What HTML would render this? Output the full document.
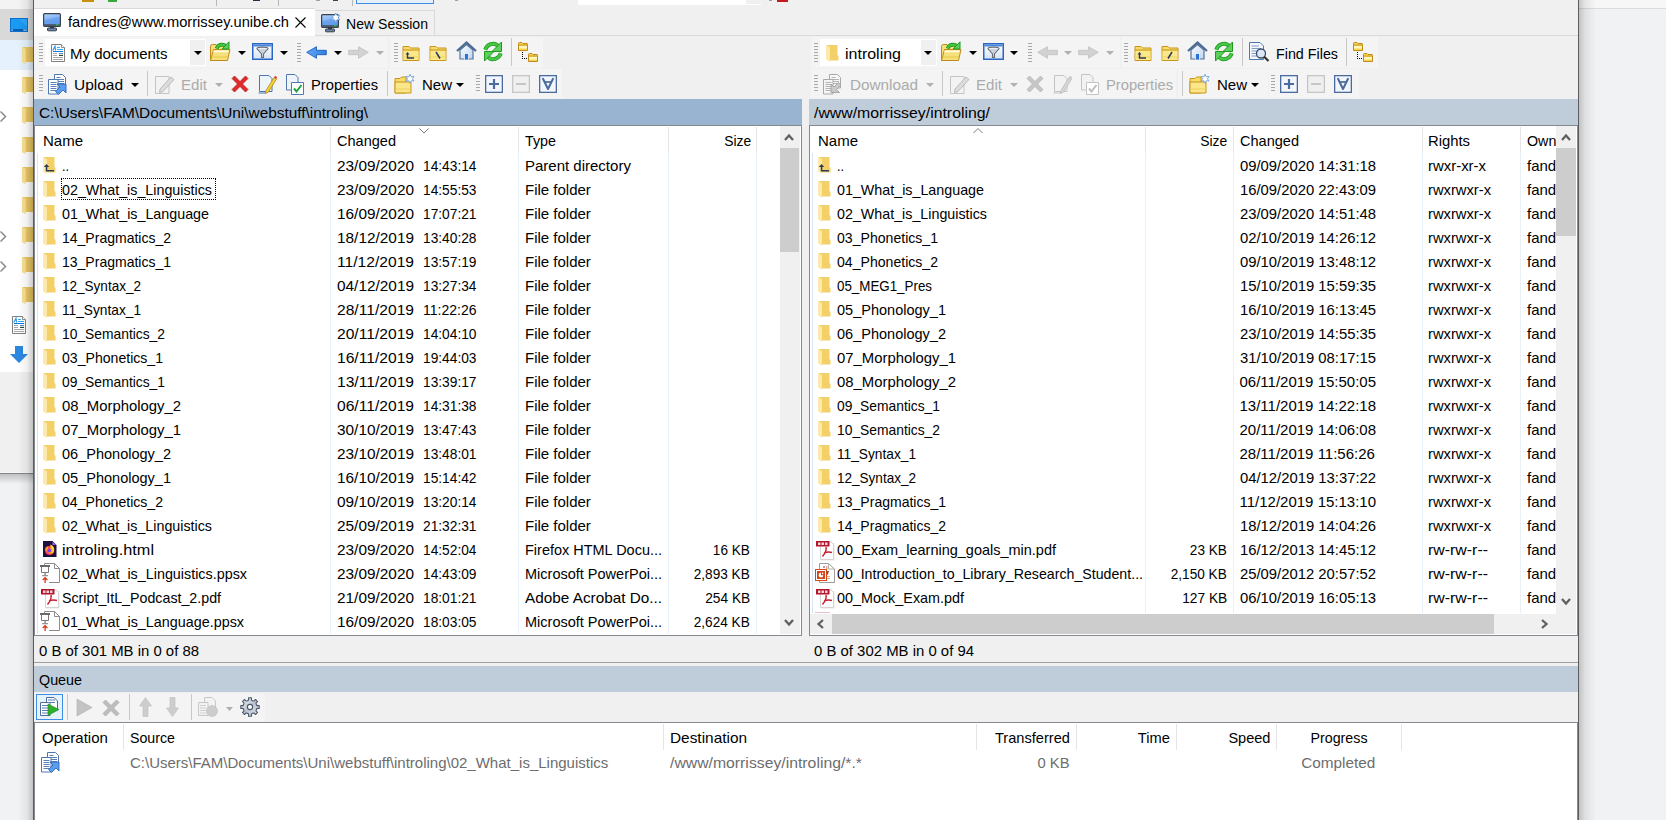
<!DOCTYPE html><html><head><meta charset="utf-8"><title>WinSCP</title><style>html,body{margin:0;padding:0;}body{width:1666px;height:820px;position:relative;overflow:hidden;background:#f0f0f0;font-family:"Liberation Sans",sans-serif;font-size:15px;color:#000;}span{font-family:"Liberation Sans",sans-serif;}</style></head><body><div style="position:absolute;left:0px;top:0px;width:33px;height:9px;background:#f3f3f3;"></div>
<div style="position:absolute;left:0px;top:9px;width:33px;height:31px;background:#d9d9d9;"></div>
<div style="position:absolute;left:0px;top:40px;width:33px;height:30px;background:#e5f1fc;"></div>
<div style="position:absolute;left:0px;top:70px;width:33px;height:302px;background:#ffffff;"></div>
<div style="position:absolute;left:0px;top:372px;width:33px;height:100px;background:#f0f0f0;"></div>
<div style="position:absolute;left:0px;top:472px;width:33px;height:348px;background:#f1f2f4;"></div>
<div style="position:absolute;left:0px;top:472px;width:33px;height:1px;background:#f6f6f6;"></div>
<div style="position:absolute;left:0px;top:473px;width:33px;height:1px;background:#858585;"></div>
<div style="position:absolute;left:0px;top:474px;width:33px;height:10px;background:linear-gradient(to bottom,rgba(0,0,0,0.2),rgba(0,0,0,0));"></div>
<svg style="position:absolute;left:10px;top:18px;overflow:visible" width="18" height="14" viewBox="0 0 18 14"><rect x="0.5" y="0.5" width="17" height="13" fill="#1a9af3" stroke="#0b6fd0"/><path d="M9 1 L17 1 V9 Z" fill="#3aaefa" opacity="0.6"/><rect x="1" y="11" width="16" height="2" fill="#0a5fb0"/><rect x="1.5" y="11.5" width="1.2" height="1.2" fill="#fff"/><rect x="13.5" y="11.5" width="1.2" height="1.2" fill="#fff"/><rect x="15.3" y="11.5" width="1.2" height="1.2" fill="#fff"/></svg>
<svg style="position:absolute;left:22px;top:47px;overflow:visible" width="12" height="17" viewBox="0 0 12 17"><path d="M1 0 H12 V15 H1 Z" fill="#e9c662"/><path d="M0 0 L3.8 1.8 V17 L0 15.2 Z" fill="#f7df94"/></svg>
<svg style="position:absolute;left:22px;top:77px;overflow:visible" width="12" height="17" viewBox="0 0 12 17"><path d="M1 0 H12 V15 H1 Z" fill="#e9c662"/><path d="M0 0 L3.8 1.8 V17 L0 15.2 Z" fill="#f7df94"/></svg>
<svg style="position:absolute;left:22px;top:107px;overflow:visible" width="12" height="17" viewBox="0 0 12 17"><path d="M1 0 H12 V15 H1 Z" fill="#e9c662"/><path d="M0 0 L3.8 1.8 V17 L0 15.2 Z" fill="#f7df94"/></svg>
<svg style="position:absolute;left:22px;top:137px;overflow:visible" width="12" height="17" viewBox="0 0 12 17"><path d="M1 0 H12 V15 H1 Z" fill="#e9c662"/><path d="M0 0 L3.8 1.8 V17 L0 15.2 Z" fill="#f7df94"/></svg>
<svg style="position:absolute;left:22px;top:167px;overflow:visible" width="12" height="17" viewBox="0 0 12 17"><path d="M1 0 H12 V15 H1 Z" fill="#e9c662"/><path d="M0 0 L3.8 1.8 V17 L0 15.2 Z" fill="#f7df94"/></svg>
<svg style="position:absolute;left:22px;top:197px;overflow:visible" width="12" height="17" viewBox="0 0 12 17"><path d="M1 0 H12 V15 H1 Z" fill="#e9c662"/><path d="M0 0 L3.8 1.8 V17 L0 15.2 Z" fill="#f7df94"/></svg>
<svg style="position:absolute;left:22px;top:227px;overflow:visible" width="12" height="17" viewBox="0 0 12 17"><path d="M1 0 H12 V15 H1 Z" fill="#e9c662"/><path d="M0 0 L3.8 1.8 V17 L0 15.2 Z" fill="#f7df94"/></svg>
<svg style="position:absolute;left:22px;top:257px;overflow:visible" width="12" height="17" viewBox="0 0 12 17"><path d="M1 0 H12 V15 H1 Z" fill="#e9c662"/><path d="M0 0 L3.8 1.8 V17 L0 15.2 Z" fill="#f7df94"/></svg>
<svg style="position:absolute;left:22px;top:287px;overflow:visible" width="12" height="17" viewBox="0 0 12 17"><path d="M1 0 H12 V15 H1 Z" fill="#e9c662"/><path d="M0 0 L3.8 1.8 V17 L0 15.2 Z" fill="#f7df94"/></svg>
<svg style="position:absolute;left:0px;top:111px;overflow:visible" width="7" height="11" viewBox="0 0 7 11"><path d="M0.5 0.5 L5.5 5.5 L0.5 10.5" stroke="#8a8a8a" stroke-width="1.5" fill="none"/></svg>
<svg style="position:absolute;left:0px;top:231px;overflow:visible" width="7" height="11" viewBox="0 0 7 11"><path d="M0.5 0.5 L5.5 5.5 L0.5 10.5" stroke="#8a8a8a" stroke-width="1.5" fill="none"/></svg>
<svg style="position:absolute;left:0px;top:261px;overflow:visible" width="7" height="11" viewBox="0 0 7 11"><path d="M0.5 0.5 L5.5 5.5 L0.5 10.5" stroke="#8a8a8a" stroke-width="1.5" fill="none"/></svg>
<svg style="position:absolute;left:12px;top:316px;overflow:visible" width="14" height="18" viewBox="0 0 14 18"><path d="M0.5 0.5 H10.5 L13.5 3.5 V17.5 H0.5 Z" fill="#fff" stroke="#808080"/><path d="M10.5 0.5 V3.5 H13.5" fill="#fff" stroke="#909090"/><path d="M1.8 6.5 L4 2.2 L4.6 6.5" stroke="#2a9af0" stroke-width="1.2" fill="none"/><rect x="6" y="3" width="3" height="1" fill="#40aaf0"/><rect x="6" y="5" width="6" height="1" fill="#40aaf0"/><rect x="2" y="7" width="10" height="1" fill="#0a7ee0"/><rect x="2" y="9" width="4" height="1" fill="#a8a8a8"/><rect x="2" y="11" width="4" height="1" fill="#a8a8a8"/><rect x="8" y="9" width="4" height="1" fill="#5a88e0"/><rect x="8" y="10" width="4" height="1" fill="#dde8d8"/><rect x="8" y="11" width="4" height="1" fill="#2c4a30"/><rect x="2" y="13" width="10" height="1" fill="#a8a8a8"/><rect x="2" y="15" width="10" height="1" fill="#a8a8a8"/></svg>
<svg style="position:absolute;left:10px;top:346px;overflow:visible" width="18" height="17" viewBox="0 0 18 17"><path d="M5 0 H13 V8 H18 L9 17 L0 8 H5 Z" fill="#2a88e0"/></svg>
<div style="position:absolute;left:18px;top:0;width:15px;height:820px;background:linear-gradient(to right,rgba(0,0,0,0),rgba(0,0,0,0.06) 60%,rgba(0,0,0,0.2))"></div>
<div style="position:absolute;left:1579px;top:0px;width:87px;height:8px;background:#f7f7f8;"></div>
<div style="position:absolute;left:1579px;top:8px;width:87px;height:1px;background:#dcdcdc;"></div>
<div style="position:absolute;left:1579px;top:9px;width:87px;height:811px;background:#f1f2f4;"></div>
<div style="position:absolute;left:1579px;top:0;width:17px;height:820px;background:linear-gradient(to right,rgba(0,0,0,0.2),rgba(0,0,0,0.08) 35%,rgba(0,0,0,0))"></div>
<div style="position:absolute;left:33px;top:0px;width:1546px;height:820px;background:#f0f0f0;"></div>
<div style="position:absolute;left:33px;top:0px;width:1px;height:820px;background:#5c5c5c;"></div>
<div style="position:absolute;left:1578px;top:0px;width:1px;height:820px;background:#5c5c5c;"></div>
<svg style="position:absolute;left:39px;top:-2px;overflow:visible" width="4" height="3" viewBox="0 0 4 3"><rect x="0" y="0" width="4" height="1" fill="#a8a8a8"/></svg>
<div style="position:absolute;left:82px;top:0px;width:12px;height:2px;background:#c8900f;"></div>
<div style="position:absolute;left:108px;top:0px;width:9px;height:2px;background:#3aa83a;"></div>
<div style="position:absolute;left:216px;top:0px;width:1px;height:6px;background:#b8b8b8;"></div>
<div style="position:absolute;left:253px;top:0px;width:7px;height:1px;background:#223048;"></div>
<div style="position:absolute;left:278px;top:0px;width:1px;height:6px;background:#b8b8b8;"></div>
<div style="position:absolute;left:316px;top:0px;width:4px;height:1px;background:#a0a0a0;"></div>
<div style="position:absolute;left:333px;top:0px;width:5px;height:1px;background:#334466;"></div>
<div style="position:absolute;left:352px;top:0px;width:1px;height:6px;background:#b8b8b8;"></div>
<div style="position:absolute;left:356px;top:0px;width:78px;height:4px;background:#e5f0fb;box-sizing:border-box;border:1px solid #3d8fe6;border-top:none"></div>
<div style="position:absolute;left:455px;top:0px;width:3px;height:1px;background:#a0a0a0;"></div>
<div style="position:absolute;left:578px;top:0px;width:183px;height:5px;background:#ffffff;"></div>
<div style="position:absolute;left:746px;top:0px;width:15px;height:4px;background:#f0f0f0;"></div>
<div style="position:absolute;left:769px;top:0px;width:3px;height:1px;background:#a0a0a0;"></div>
<div style="position:absolute;left:777px;top:0px;width:11px;height:2px;background:#c21a1a;"></div>
<div style="position:absolute;left:34px;top:8px;width:281px;height:1px;background:#dadada;"></div>
<div style="position:absolute;left:34px;top:9px;width:281px;height:27px;background:#ffffff;"></div>
<div style="position:absolute;left:315px;top:10px;width:120px;height:26px;background:#f0f0f0;box-sizing:border-box;border:1px solid #d9d9d9;border-left:none;border-bottom:none"></div>
<div style="position:absolute;left:315px;top:35px;width:1263px;height:1px;background:#dadada;"></div>
<svg style="position:absolute;left:43px;top:13px;overflow:visible" width="20" height="20" viewBox="0 0 20 20"><defs><linearGradient id="scr" x1="0" y1="0" x2="0.3" y2="1"><stop offset="0" stop-color="#b4d2fb"/><stop offset="0.45" stop-color="#8ab8f6"/><stop offset="0.5" stop-color="#6fa4ef"/><stop offset="1" stop-color="#5f98ea"/></linearGradient></defs><rect x="0.6" y="0.6" width="16.8" height="12.8" rx="1" fill="url(#scr)" stroke="#3a4250" stroke-width="1.2"/><rect x="1.2" y="11.2" width="15.6" height="1.6" fill="#4a525e"/><rect x="13" y="11.2" width="2.5" height="1.2" fill="#38c03c"/><rect x="7" y="13.5" width="4" height="1.8" fill="#2f3540"/><rect x="4.5" y="15" width="9" height="2.8" rx="0.8" fill="#6d85a3" stroke="#333c48" stroke-width="1"/></svg>
<span style="position:absolute;top:13px;height:17px;line-height:17px;font-size:15px;color:#000;white-space:pre;left:68px;transform-origin:0 0;transform:scaleX(0.9785);">fandres@www.morrissey.unibe.ch</span>
<svg style="position:absolute;left:295px;top:17px;overflow:visible" width="11" height="11" viewBox="0 0 11 11"><path d="M0.5 0.5 L10.5 10.5 M10.5 0.5 L0.5 10.5" stroke="#000" stroke-width="1.1"/></svg>
<svg style="position:absolute;left:321px;top:14px;overflow:visible" width="20" height="20" viewBox="0 0 20 20"><defs><linearGradient id="scr" x1="0" y1="0" x2="0.3" y2="1"><stop offset="0" stop-color="#b4d2fb"/><stop offset="0.45" stop-color="#8ab8f6"/><stop offset="0.5" stop-color="#6fa4ef"/><stop offset="1" stop-color="#5f98ea"/></linearGradient></defs><rect x="0.6" y="0.6" width="16.8" height="12.8" rx="1" fill="url(#scr)" stroke="#3a4250" stroke-width="1.2"/><rect x="1.2" y="11.2" width="15.6" height="1.6" fill="#4a525e"/><rect x="13" y="11.2" width="2.5" height="1.2" fill="#38c03c"/><rect x="7" y="13.5" width="4" height="1.8" fill="#2f3540"/><rect x="4.5" y="15" width="9" height="2.8" rx="0.8" fill="#6d85a3" stroke="#333c48" stroke-width="1"/><polygon points="14.80,-1.00 16.00,1.52 18.78,1.30 17.20,3.60 18.78,5.90 16.00,5.68 14.80,8.20 13.60,5.68 10.82,5.90 12.40,3.60 10.82,1.30 13.60,1.52" fill="#fff" stroke="#6f9fd8" stroke-width="0.9"/></svg>
<span style="position:absolute;top:15px;height:17px;line-height:17px;font-size:15px;color:#000;white-space:pre;left:346px;transform-origin:0 0;transform:scaleX(0.9367);">New Session</span>
<div style="position:absolute;left:35px;top:37px;width:257px;height:31px;background:#f4f4f4;"></div>
<div style="position:absolute;left:293px;top:37px;width:95px;height:31px;background:#f4f4f4;"></div>
<div style="position:absolute;left:390px;top:37px;width:153px;height:31px;background:#f4f4f4;"></div>
<div style="position:absolute;left:35px;top:69px;width:440px;height:29px;background:#f4f4f4;"></div>
<div style="position:absolute;left:476px;top:69px;width:86px;height:29px;background:#f4f4f4;"></div>
<svg style="position:absolute;left:39px;top:43px;overflow:visible" width="4" height="21" viewBox="0 0 4 21"><rect x="0" y="0" width="4" height="1" fill="#a8a8a8"/><rect x="0" y="3" width="4" height="1" fill="#a8a8a8"/><rect x="0" y="6" width="4" height="1" fill="#a8a8a8"/><rect x="0" y="9" width="4" height="1" fill="#a8a8a8"/><rect x="0" y="12" width="4" height="1" fill="#a8a8a8"/><rect x="0" y="15" width="4" height="1" fill="#a8a8a8"/><rect x="0" y="18" width="4" height="1" fill="#a8a8a8"/></svg>
<div style="position:absolute;left:45px;top:39px;width:161px;height:27px;background:#ffffff;"></div>
<div style="position:absolute;left:190px;top:40px;width:15px;height:25px;background:#f0f0f0;"></div>
<svg style="position:absolute;left:51px;top:44px;overflow:visible" width="14" height="18" viewBox="0 0 14 18"><path d="M0.5 0.5 H10.5 L13.5 3.5 V17.5 H0.5 Z" fill="#fff" stroke="#808080"/><path d="M10.5 0.5 V3.5 H13.5" fill="#fff" stroke="#909090"/><path d="M1.8 6.5 L4 2.2 L4.6 6.5" stroke="#2a9af0" stroke-width="1.2" fill="none"/><rect x="6" y="3" width="3" height="1" fill="#40aaf0"/><rect x="6" y="5" width="6" height="1" fill="#40aaf0"/><rect x="2" y="7" width="10" height="1" fill="#0a7ee0"/><rect x="2" y="9" width="4" height="1" fill="#a8a8a8"/><rect x="2" y="11" width="4" height="1" fill="#a8a8a8"/><rect x="8" y="9" width="4" height="1" fill="#5a88e0"/><rect x="8" y="10" width="4" height="1" fill="#dde8d8"/><rect x="8" y="11" width="4" height="1" fill="#2c4a30"/><rect x="2" y="13" width="10" height="1" fill="#a8a8a8"/><rect x="2" y="15" width="10" height="1" fill="#a8a8a8"/></svg>
<span style="position:absolute;top:45px;height:17px;line-height:17px;font-size:15px;color:#000;white-space:pre;left:70px;transform-origin:0 0;">My documents</span>
<svg style="position:absolute;left:194px;top:51px;overflow:visible" width="8" height="4" viewBox="0 0 8 4"><path d="M0 0 H8 L4.0 4 Z" fill="#000"/></svg>
<svg style="position:absolute;left:210px;top:41px;overflow:visible" width="21" height="21" viewBox="0 0 21 21"><path d="M0.5 5.5 Q0.5 3.5 2.5 3.5 H6 L7.5 5 H15.5 V19.5 H0.5 Z" fill="#f7e07a" stroke="#c08a1a" stroke-width="1"/><path d="M3.5 8.5 H20 L17.5 19.5 H0.5 Z" fill="#f6e07c" stroke="#c08a1a" stroke-width="1" stroke-linejoin="round"/><path d="M3.6 9.6 H18.6 L18.2 11.2 H3.2 Z" fill="#fffbe0"/><path d="M1.5 16 H17.8" stroke="#e8c84a" stroke-width="1"/><path d="M6.5 7.5 Q9 1.8 15.8 4.6" stroke="#1f9a1f" stroke-width="3.6" fill="none"/><path d="M6.5 7.5 Q9 1.8 15.8 4.6" stroke="#46c646" stroke-width="2" fill="none"/><path d="M19 0.8 V8 H12 Z" fill="#5ccf5c" stroke="#1f9a1f" stroke-width="1" stroke-linejoin="round"/></svg>
<svg style="position:absolute;left:238px;top:51px;overflow:visible" width="8" height="4" viewBox="0 0 8 4"><path d="M0 0 H8 L4.0 4 Z" fill="#000"/></svg>
<svg style="position:absolute;left:252px;top:43px;overflow:visible" width="21" height="17" viewBox="0 0 21 17"><defs><linearGradient id="flg" x1="0" y1="0" x2="0" y2="1"><stop offset="0" stop-color="#ffffff"/><stop offset="1" stop-color="#d6e4f5"/></linearGradient></defs><rect x="0.75" y="0.75" width="19.5" height="15.5" fill="url(#flg)" stroke="#2a66c4" stroke-width="1.5"/><rect x="1.5" y="1.5" width="18" height="2" fill="#4a86dc"/><ellipse cx="10.5" cy="5.6" rx="5.6" ry="1.5" fill="#eef2f6" stroke="#6a6e74" stroke-width="1.1"/><path d="M5.2 6 L9.5 11 V14.5 H11.5 V11 L15.8 6" fill="#c9d3de" stroke="#6a6e74" stroke-width="1.1"/></svg>
<svg style="position:absolute;left:280px;top:51px;overflow:visible" width="8" height="4" viewBox="0 0 8 4"><path d="M0 0 H8 L4.0 4 Z" fill="#000"/></svg>
<svg style="position:absolute;left:297px;top:43px;overflow:visible" width="4" height="21" viewBox="0 0 4 21"><rect x="0" y="0" width="4" height="1" fill="#a8a8a8"/><rect x="0" y="3" width="4" height="1" fill="#a8a8a8"/><rect x="0" y="6" width="4" height="1" fill="#a8a8a8"/><rect x="0" y="9" width="4" height="1" fill="#a8a8a8"/><rect x="0" y="12" width="4" height="1" fill="#a8a8a8"/><rect x="0" y="15" width="4" height="1" fill="#a8a8a8"/><rect x="0" y="18" width="4" height="1" fill="#a8a8a8"/></svg>
<svg style="position:absolute;left:306px;top:46px;overflow:visible" width="21" height="13" viewBox="0 0 21 13"><defs><linearGradient id="ba306" x1="0" y1="0" x2="1" y2="0"><stop offset="0" stop-color="#62a6f7"/><stop offset="1" stop-color="#2f7fe0"/></linearGradient></defs><path d="M0.7 6.3 L10.5 0.7 V4.3 H20.3 V8.7 H10.5 V12.3 Z" fill="url(#ba306)" stroke="#1c5fb8" stroke-width="0.9" stroke-linejoin="round"/></svg>
<svg style="position:absolute;left:334px;top:51px;overflow:visible" width="8" height="4" viewBox="0 0 8 4"><path d="M0 0 H8 L4.0 4 Z" fill="#000"/></svg>
<svg style="position:absolute;left:348px;top:46px;overflow:visible" width="21" height="13" viewBox="0 0 21 13"><path d="M20.3 6.3 L10.5 0.7 V4.3 H0.7 V8.7 H10.5 V12.3 Z" fill="#d2d2d2" stroke="#c4c4c4" stroke-width="0.9" stroke-linejoin="round"/></svg>
<svg style="position:absolute;left:376px;top:51px;overflow:visible" width="8" height="4" viewBox="0 0 8 4"><path d="M0 0 H8 L4.0 4 Z" fill="#b0b0b0"/></svg>
<svg style="position:absolute;left:394px;top:43px;overflow:visible" width="4" height="21" viewBox="0 0 4 21"><rect x="0" y="0" width="4" height="1" fill="#a8a8a8"/><rect x="0" y="3" width="4" height="1" fill="#a8a8a8"/><rect x="0" y="6" width="4" height="1" fill="#a8a8a8"/><rect x="0" y="9" width="4" height="1" fill="#a8a8a8"/><rect x="0" y="12" width="4" height="1" fill="#a8a8a8"/><rect x="0" y="15" width="4" height="1" fill="#a8a8a8"/><rect x="0" y="18" width="4" height="1" fill="#a8a8a8"/></svg>
<svg style="position:absolute;left:402px;top:45px;overflow:visible" width="18" height="16" viewBox="0 0 18 16"><path d="M1 1.5 H7 L8.5 3 H17 V15.5 H1 Z" fill="#f7dc6c" stroke="#c9961a" stroke-width="1"/><path d="M1 5 H17" stroke="#c9961a" stroke-width="1"/><path d="M1.5 6 H16.5 V15 H1.5 Z" fill="#fbe88c"/><path d="M2 12 H16" stroke="#eed060" stroke-width="1"/><path d="M5.5 9 V13 H12" stroke="#2b3a55" stroke-width="1.4" fill="none"/><path d="M3.5 9.5 L5.5 7 L7.5 9.5 Z" fill="#2b3a55"/></svg>
<svg style="position:absolute;left:429px;top:45px;overflow:visible" width="18" height="16" viewBox="0 0 18 16"><path d="M1 1.5 H7 L8.5 3 H17 V15.5 H1 Z" fill="#f7dc6c" stroke="#c9961a" stroke-width="1"/><path d="M1 5 H17" stroke="#c9961a" stroke-width="1"/><path d="M1.5 6 H16.5 V15 H1.5 Z" fill="#fbe88c"/><path d="M2 12 H16" stroke="#eed060" stroke-width="1"/><path d="M7 7 L11 13.5" stroke="#2b3a55" stroke-width="1.5"/></svg>
<svg style="position:absolute;left:456px;top:41px;overflow:visible" width="21" height="19" viewBox="0 0 21 19"><defs><linearGradient id="hmg" x1="0" y1="0" x2="1" y2="1"><stop offset="0" stop-color="#ffffff"/><stop offset="1" stop-color="#bcd3ee"/></linearGradient></defs><path d="M4 9 L10.5 3.5 L17 9 V18 H4 Z" fill="url(#hmg)" stroke="#55739c" stroke-width="1.2"/><path d="M1 10 L10.5 1.5 L20 10" stroke="#4c6a92" stroke-width="2.2" fill="none"/><rect x="8" y="12" width="5" height="6.5" fill="#fff"/><rect x="8.8" y="12.8" width="3.4" height="5.7" fill="#2d72d8"/></svg>
<svg style="position:absolute;left:483px;top:41px;overflow:visible" width="20" height="21" viewBox="0 0 20 21"><path d="M2.2 8.8 Q4.5 2.8 10.5 2.8 Q13.5 2.8 15.2 5.5" stroke="#1f9a1f" stroke-width="4" fill="none"/><path d="M2.2 8.8 Q4.5 2.8 10.5 2.8 Q13.5 2.8 15.2 5.5" stroke="#46c646" stroke-width="2.4" fill="none"/><path d="M18.5 1 V10.5 H9 Z" fill="#5ccf5c" stroke="#1f9a1f" stroke-width="1"/><g transform="rotate(180 10 10.5)"><path d="M2.2 8.8 Q4.5 2.8 10.5 2.8 Q13.5 2.8 15.2 5.5" stroke="#1f9a1f" stroke-width="4" fill="none"/><path d="M2.2 8.8 Q4.5 2.8 10.5 2.8 Q13.5 2.8 15.2 5.5" stroke="#46c646" stroke-width="2.4" fill="none"/><path d="M18.5 1 V10.5 H9 Z" fill="#5ccf5c" stroke="#1f9a1f" stroke-width="1"/></g></svg>
<div style="position:absolute;left:511px;top:38px;width:1px;height:28px;background:#c8c8c8;"></div>
<svg style="position:absolute;left:518px;top:41px;overflow:visible" width="21" height="21" viewBox="0 0 21 21"><g transform="translate(0 1)"><path d="M0.5 1.5 Q0.5 0.5 1.5 0.5 H4 L5 1.5 H9 Q9.5 1.5 9.5 2.5 V8.5 H0.5 Z" fill="#f5d552" stroke="#c08a1a" stroke-width="1"/><rect x="1" y="4" width="8" height="2.5" fill="#fff6c0"/><path d="M0.5 3 H9.5" stroke="#c08a1a" stroke-width="0.8"/></g><g transform="translate(10 12)"><path d="M0.5 1.5 Q0.5 0.5 1.5 0.5 H4 L5 1.5 H9 Q9.5 1.5 9.5 2.5 V8.5 H0.5 Z" fill="#f5d552" stroke="#c08a1a" stroke-width="1"/><rect x="1" y="4" width="8" height="2.5" fill="#fff6c0"/><path d="M0.5 3 H9.5" stroke="#c08a1a" stroke-width="0.8"/></g><rect x="4" y="11" width="1" height="1" fill="#000"/><rect x="4" y="13" width="1" height="1" fill="#000"/><rect x="4" y="15" width="1" height="1" fill="#000"/><rect x="4" y="17" width="1" height="1" fill="#000"/><rect x="6" y="17" width="1" height="1" fill="#000"/><rect x="8" y="17" width="1" height="1" fill="#000"/></svg>
<svg style="position:absolute;left:39px;top:75px;overflow:visible" width="4" height="18" viewBox="0 0 4 18"><rect x="0" y="0" width="4" height="1" fill="#a8a8a8"/><rect x="0" y="3" width="4" height="1" fill="#a8a8a8"/><rect x="0" y="6" width="4" height="1" fill="#a8a8a8"/><rect x="0" y="9" width="4" height="1" fill="#a8a8a8"/><rect x="0" y="12" width="4" height="1" fill="#a8a8a8"/><rect x="0" y="15" width="4" height="1" fill="#a8a8a8"/></svg>
<svg style="position:absolute;left:48px;top:74px;overflow:visible" width="19" height="21" viewBox="0 0 19 21"><path d="M6.5 0.5 H14.5 L17.5 3.5 V14 H6.5 Z" fill="#ffffff" stroke="#4f78b3"/><path d="M8.5 3.5 H12.5 M8.5 5.5 H16 M8.5 7.5 H16 M8.5 9.5 H16" stroke="#5a7fb5"/><path d="M0.5 5.5 H10 V20 H0.5 Z" fill="#ffffff" stroke="#4f78b3"/><path d="M2.5 8.5 H8.5 M2.5 10.5 H8.5 M2.5 12.5 H8.5 M2.5 14.5 H8.5 M2.5 16.5 H8.5" stroke="#5a7fb5"/><path d="M10.5 20.5 L15 16 L18 19 V10 H9 L12 13 L7.5 17.5 Z" fill="#5a9cf0" stroke="#2f66b8" stroke-width="0.9"/></svg>
<span style="position:absolute;top:76px;height:17px;line-height:17px;font-size:15px;color:#000;white-space:pre;left:74px;transform-origin:0 0;transform:scaleX(1.0308);">Upload</span>
<svg style="position:absolute;left:131px;top:83px;overflow:visible" width="8" height="4" viewBox="0 0 8 4"><path d="M0 0 H8 L4.0 4 Z" fill="#000"/></svg>
<div style="position:absolute;left:147px;top:71px;width:1px;height:25px;background:#c8c8c8;"></div>
<svg style="position:absolute;left:154px;top:74px;overflow:visible" width="21" height="20" viewBox="0 0 21 20"><path d="M1.5 2.5 H15 V19.5 H1.5 Z" fill="#f3f3f3" stroke="#c4c4c4"/><path d="M6 15 L17 3 L20 5.5 L9 17.5 L5.5 18.5 Z" fill="#dcdcdc" stroke="#b0b0b0" stroke-width="0.8"/></svg>
<span style="position:absolute;top:76px;height:17px;line-height:17px;font-size:15px;color:#ababab;white-space:pre;left:181px;transform-origin:0 0;transform:scaleX(1.0059);">Edit</span>
<svg style="position:absolute;left:215px;top:83px;overflow:visible" width="8" height="4" viewBox="0 0 8 4"><path d="M0 0 H8 L4.0 4 Z" fill="#b0b0b0"/></svg>
<svg style="position:absolute;left:231px;top:75px;overflow:visible" width="18" height="18" viewBox="0 0 18 18"><path d="M1 3.5 L3.5 1 L9 6.5 L14.5 1 L17 3.5 L11.5 9 L17 14.5 L14.5 17 L9 11.5 L3.5 17 L1 14.5 L6.5 9 Z" fill="#e02a2a" stroke="#b31b1b" stroke-width="0.7"/></svg>
<svg style="position:absolute;left:258px;top:74px;overflow:visible" width="19" height="20" viewBox="0 0 19 20"><path d="M1.5 1.5 H11 L14 4.5 V17.5 H1.5 Z" fill="#eef4fb" stroke="#4f76b0"/><path d="M0.5 19 H8" stroke="#4f76b0"/><path d="M8 16.5 L16 3.5 L18.5 5 L10.5 18 L7.5 19.5 Z" fill="#f4d03a" stroke="#a88a1a" stroke-width="0.8"/><path d="M16 3.5 L17 1.8 L19 3 L18.5 5 Z" fill="#e04040"/></svg>
<svg style="position:absolute;left:285px;top:74px;overflow:visible" width="20" height="21" viewBox="0 0 20 21"><path d="M1.5 0.5 H10 L13 3.5 V16 H1.5 Z" fill="#eef4fb" stroke="#5278b0"/><path d="M6.5 8.5 H18.5 V20.5 H6.5 Z" fill="#fff" stroke="#5278b0"/><path d="M9 14.5 L11.5 17.5 L16.5 11" stroke="#1fa33a" stroke-width="2" fill="none"/></svg>
<span style="position:absolute;top:76px;height:17px;line-height:17px;font-size:15px;color:#000;white-space:pre;left:311px;transform-origin:0 0;transform:scaleX(0.9800);">Properties</span>
<div style="position:absolute;left:387px;top:71px;width:1px;height:25px;background:#c8c8c8;"></div>
<svg style="position:absolute;left:394px;top:74px;overflow:visible" width="21" height="20" viewBox="0 0 21 20"><path d="M1 4.5 H6 L7.5 3 H12 V19 H1 Z" fill="#f7dc6c" stroke="#c9961a"/><path d="M1 8 H17 V19 H1 Z" fill="#fbe68a" stroke="#c9961a"/><path d="M1.5 15 H16.5" stroke="#eed060"/><path d="M16 0.3 L17.2 2.8 L20 2.5 L18.4 4.8 L20 7 L17.2 6.7 L16 9.3 L14.8 6.7 L12 7 L13.6 4.8 L12 2.5 L14.8 2.8 Z" fill="#fff" stroke="#6f9fd8" stroke-width="0.9"/></svg>
<span style="position:absolute;top:76px;height:17px;line-height:17px;font-size:15px;color:#000;white-space:pre;left:422px;transform-origin:0 0;">New</span>
<svg style="position:absolute;left:456px;top:83px;overflow:visible" width="8" height="4" viewBox="0 0 8 4"><path d="M0 0 H8 L4.0 4 Z" fill="#000"/></svg>
<svg style="position:absolute;left:476px;top:75px;overflow:visible" width="4" height="18" viewBox="0 0 4 18"><rect x="0" y="0" width="4" height="1" fill="#a8a8a8"/><rect x="0" y="3" width="4" height="1" fill="#a8a8a8"/><rect x="0" y="6" width="4" height="1" fill="#a8a8a8"/><rect x="0" y="9" width="4" height="1" fill="#a8a8a8"/><rect x="0" y="12" width="4" height="1" fill="#a8a8a8"/><rect x="0" y="15" width="4" height="1" fill="#a8a8a8"/></svg>
<svg style="position:absolute;left:485px;top:75px;overflow:visible" width="18" height="18" viewBox="0 0 18 18"><rect x="0.65" y="0.65" width="16.7" height="16.7" fill="#f2f6fc" stroke="#4a6b9c" stroke-width="1.3"/><path d="M9 4 V14 M4 9 H14" stroke="#4a6b9c" stroke-width="2.2"/></svg>
<svg style="position:absolute;left:512px;top:75px;overflow:visible" width="18" height="18" viewBox="0 0 18 18"><rect x="0.65" y="0.65" width="16.7" height="16.7" fill="#f0f0f0" stroke="#c6c6c6" stroke-width="1.3"/><path d="M4 9 H14" stroke="#c6c6c6" stroke-width="2"/></svg>
<svg style="position:absolute;left:539px;top:75px;overflow:visible" width="18" height="18" viewBox="0 0 18 18"><rect x="0.65" y="0.65" width="16.7" height="16.7" fill="#f2f6fc" stroke="#4a6b9c" stroke-width="1.3"/><path d="M4 3.8 L9 14 L14 3.8" fill="none" stroke="#4a6b9c" stroke-width="2" stroke-linecap="round" stroke-linejoin="round"/><path d="M5.4 7 H12.6" stroke="#4a6b9c" stroke-width="1.7"/></svg>
<div style="position:absolute;left:811px;top:37px;width:246px;height:31px;background:#f4f4f4;"></div>
<div style="position:absolute;left:1025px;top:37px;width:95px;height:31px;background:#f4f4f4;"></div>
<div style="position:absolute;left:1122px;top:37px;width:256px;height:31px;background:#f4f4f4;"></div>
<div style="position:absolute;left:811px;top:69px;width:365px;height:29px;background:#f4f4f4;"></div>
<div style="position:absolute;left:1178px;top:69px;width:90px;height:29px;background:#f4f4f4;"></div>
<div style="position:absolute;left:1269px;top:69px;width:90px;height:29px;background:#f4f4f4;"></div>
<svg style="position:absolute;left:814px;top:43px;overflow:visible" width="4" height="21" viewBox="0 0 4 21"><rect x="0" y="0" width="4" height="1" fill="#a8a8a8"/><rect x="0" y="3" width="4" height="1" fill="#a8a8a8"/><rect x="0" y="6" width="4" height="1" fill="#a8a8a8"/><rect x="0" y="9" width="4" height="1" fill="#a8a8a8"/><rect x="0" y="12" width="4" height="1" fill="#a8a8a8"/><rect x="0" y="15" width="4" height="1" fill="#a8a8a8"/><rect x="0" y="18" width="4" height="1" fill="#a8a8a8"/></svg>
<div style="position:absolute;left:820px;top:39px;width:117px;height:27px;background:#ffffff;"></div>
<div style="position:absolute;left:921px;top:40px;width:15px;height:25px;background:#f0f0f0;"></div>
<svg style="position:absolute;left:826px;top:45px;overflow:visible" width="13" height="17" viewBox="0 0 13 17"><path d="M1 0 H11.5 V10.5 H12.5 V15.5 H2 Z" fill="#f4d068"/><path d="M0 0 L4 2.5 V17 L0 14.5 Z" fill="#fce9ab"/></svg>
<span style="position:absolute;top:45px;height:17px;line-height:17px;font-size:15px;color:#000;white-space:pre;left:845px;transform-origin:0 0;transform:scaleX(1.0661);">introling</span>
<svg style="position:absolute;left:924px;top:51px;overflow:visible" width="8" height="4" viewBox="0 0 8 4"><path d="M0 0 H8 L4.0 4 Z" fill="#000"/></svg>
<svg style="position:absolute;left:941px;top:41px;overflow:visible" width="21" height="21" viewBox="0 0 21 21"><path d="M0.5 5.5 Q0.5 3.5 2.5 3.5 H6 L7.5 5 H15.5 V19.5 H0.5 Z" fill="#f7e07a" stroke="#c08a1a" stroke-width="1"/><path d="M3.5 8.5 H20 L17.5 19.5 H0.5 Z" fill="#f6e07c" stroke="#c08a1a" stroke-width="1" stroke-linejoin="round"/><path d="M3.6 9.6 H18.6 L18.2 11.2 H3.2 Z" fill="#fffbe0"/><path d="M1.5 16 H17.8" stroke="#e8c84a" stroke-width="1"/><path d="M6.5 7.5 Q9 1.8 15.8 4.6" stroke="#1f9a1f" stroke-width="3.6" fill="none"/><path d="M6.5 7.5 Q9 1.8 15.8 4.6" stroke="#46c646" stroke-width="2" fill="none"/><path d="M19 0.8 V8 H12 Z" fill="#5ccf5c" stroke="#1f9a1f" stroke-width="1" stroke-linejoin="round"/></svg>
<svg style="position:absolute;left:969px;top:51px;overflow:visible" width="8" height="4" viewBox="0 0 8 4"><path d="M0 0 H8 L4.0 4 Z" fill="#000"/></svg>
<svg style="position:absolute;left:983px;top:43px;overflow:visible" width="21" height="17" viewBox="0 0 21 17"><defs><linearGradient id="flg" x1="0" y1="0" x2="0" y2="1"><stop offset="0" stop-color="#ffffff"/><stop offset="1" stop-color="#d6e4f5"/></linearGradient></defs><rect x="0.75" y="0.75" width="19.5" height="15.5" fill="url(#flg)" stroke="#2a66c4" stroke-width="1.5"/><rect x="1.5" y="1.5" width="18" height="2" fill="#4a86dc"/><ellipse cx="10.5" cy="5.6" rx="5.6" ry="1.5" fill="#eef2f6" stroke="#6a6e74" stroke-width="1.1"/><path d="M5.2 6 L9.5 11 V14.5 H11.5 V11 L15.8 6" fill="#c9d3de" stroke="#6a6e74" stroke-width="1.1"/></svg>
<svg style="position:absolute;left:1010px;top:51px;overflow:visible" width="8" height="4" viewBox="0 0 8 4"><path d="M0 0 H8 L4.0 4 Z" fill="#000"/></svg>
<svg style="position:absolute;left:1028px;top:43px;overflow:visible" width="4" height="21" viewBox="0 0 4 21"><rect x="0" y="0" width="4" height="1" fill="#a8a8a8"/><rect x="0" y="3" width="4" height="1" fill="#a8a8a8"/><rect x="0" y="6" width="4" height="1" fill="#a8a8a8"/><rect x="0" y="9" width="4" height="1" fill="#a8a8a8"/><rect x="0" y="12" width="4" height="1" fill="#a8a8a8"/><rect x="0" y="15" width="4" height="1" fill="#a8a8a8"/><rect x="0" y="18" width="4" height="1" fill="#a8a8a8"/></svg>
<svg style="position:absolute;left:1037px;top:46px;overflow:visible" width="21" height="13" viewBox="0 0 21 13"><defs><linearGradient id="ba1037" x1="0" y1="0" x2="1" y2="0"><stop offset="0" stop-color="#d2d2d2"/><stop offset="1" stop-color="#d2d2d2"/></linearGradient></defs><path d="M0.7 6.3 L10.5 0.7 V4.3 H20.3 V8.7 H10.5 V12.3 Z" fill="url(#ba1037)" stroke="#c4c4c4" stroke-width="0.9" stroke-linejoin="round"/></svg>
<svg style="position:absolute;left:1064px;top:51px;overflow:visible" width="8" height="4" viewBox="0 0 8 4"><path d="M0 0 H8 L4.0 4 Z" fill="#b0b0b0"/></svg>
<svg style="position:absolute;left:1078px;top:46px;overflow:visible" width="21" height="13" viewBox="0 0 21 13"><path d="M20.3 6.3 L10.5 0.7 V4.3 H0.7 V8.7 H10.5 V12.3 Z" fill="#d2d2d2" stroke="#c4c4c4" stroke-width="0.9" stroke-linejoin="round"/></svg>
<svg style="position:absolute;left:1106px;top:51px;overflow:visible" width="8" height="4" viewBox="0 0 8 4"><path d="M0 0 H8 L4.0 4 Z" fill="#b0b0b0"/></svg>
<svg style="position:absolute;left:1124px;top:43px;overflow:visible" width="4" height="21" viewBox="0 0 4 21"><rect x="0" y="0" width="4" height="1" fill="#a8a8a8"/><rect x="0" y="3" width="4" height="1" fill="#a8a8a8"/><rect x="0" y="6" width="4" height="1" fill="#a8a8a8"/><rect x="0" y="9" width="4" height="1" fill="#a8a8a8"/><rect x="0" y="12" width="4" height="1" fill="#a8a8a8"/><rect x="0" y="15" width="4" height="1" fill="#a8a8a8"/><rect x="0" y="18" width="4" height="1" fill="#a8a8a8"/></svg>
<svg style="position:absolute;left:1134px;top:45px;overflow:visible" width="18" height="16" viewBox="0 0 18 16"><path d="M1 1.5 H7 L8.5 3 H17 V15.5 H1 Z" fill="#f7dc6c" stroke="#c9961a" stroke-width="1"/><path d="M1 5 H17" stroke="#c9961a" stroke-width="1"/><path d="M1.5 6 H16.5 V15 H1.5 Z" fill="#fbe88c"/><path d="M2 12 H16" stroke="#eed060" stroke-width="1"/><path d="M5.5 9 V13 H12" stroke="#2b3a55" stroke-width="1.4" fill="none"/><path d="M3.5 9.5 L5.5 7 L7.5 9.5 Z" fill="#2b3a55"/></svg>
<svg style="position:absolute;left:1161px;top:45px;overflow:visible" width="18" height="16" viewBox="0 0 18 16"><path d="M1 1.5 H7 L8.5 3 H17 V15.5 H1 Z" fill="#f7dc6c" stroke="#c9961a" stroke-width="1"/><path d="M1 5 H17" stroke="#c9961a" stroke-width="1"/><path d="M1.5 6 H16.5 V15 H1.5 Z" fill="#fbe88c"/><path d="M2 12 H16" stroke="#eed060" stroke-width="1"/><path d="M11 7 L7 13.5" stroke="#2b3a55" stroke-width="1.5"/></svg>
<svg style="position:absolute;left:1187px;top:41px;overflow:visible" width="21" height="19" viewBox="0 0 21 19"><defs><linearGradient id="hmg" x1="0" y1="0" x2="1" y2="1"><stop offset="0" stop-color="#ffffff"/><stop offset="1" stop-color="#bcd3ee"/></linearGradient></defs><path d="M4 9 L10.5 3.5 L17 9 V18 H4 Z" fill="url(#hmg)" stroke="#55739c" stroke-width="1.2"/><path d="M1 10 L10.5 1.5 L20 10" stroke="#4c6a92" stroke-width="2.2" fill="none"/><rect x="8" y="12" width="5" height="6.5" fill="#fff"/><rect x="8.8" y="12.8" width="3.4" height="5.7" fill="#2d72d8"/></svg>
<svg style="position:absolute;left:1214px;top:41px;overflow:visible" width="20" height="21" viewBox="0 0 20 21"><path d="M2.2 8.8 Q4.5 2.8 10.5 2.8 Q13.5 2.8 15.2 5.5" stroke="#1f9a1f" stroke-width="4" fill="none"/><path d="M2.2 8.8 Q4.5 2.8 10.5 2.8 Q13.5 2.8 15.2 5.5" stroke="#46c646" stroke-width="2.4" fill="none"/><path d="M18.5 1 V10.5 H9 Z" fill="#5ccf5c" stroke="#1f9a1f" stroke-width="1"/><g transform="rotate(180 10 10.5)"><path d="M2.2 8.8 Q4.5 2.8 10.5 2.8 Q13.5 2.8 15.2 5.5" stroke="#1f9a1f" stroke-width="4" fill="none"/><path d="M2.2 8.8 Q4.5 2.8 10.5 2.8 Q13.5 2.8 15.2 5.5" stroke="#46c646" stroke-width="2.4" fill="none"/><path d="M18.5 1 V10.5 H9 Z" fill="#5ccf5c" stroke="#1f9a1f" stroke-width="1"/></g></svg>
<div style="position:absolute;left:1242px;top:38px;width:1px;height:28px;background:#c8c8c8;"></div>
<svg style="position:absolute;left:1249px;top:42px;overflow:visible" width="21" height="20" viewBox="0 0 21 20"><path d="M0.5 0.5 H11 L14.5 4 V17.5 H0.5 Z" fill="#f4f8fd" stroke="#5278b0"/><path d="M2.5 4 H10 M2.5 6.5 H12 M2.5 9 H8 M2.5 11.5 H8 M2.5 14 H8" stroke="#7b9bc8"/><circle cx="12" cy="11.5" r="4.5" fill="#dbe9f7" stroke="#3c4c66" stroke-width="1.3"/><path d="M15 14.5 L19.5 19" stroke="#333" stroke-width="2.2"/></svg>
<span style="position:absolute;top:45px;height:17px;line-height:17px;font-size:15px;color:#000;white-space:pre;left:1276px;transform-origin:0 0;transform:scaleX(0.9536);">Find Files</span>
<div style="position:absolute;left:1346px;top:38px;width:1px;height:28px;background:#c8c8c8;"></div>
<svg style="position:absolute;left:1353px;top:41px;overflow:visible" width="21" height="21" viewBox="0 0 21 21"><g transform="translate(0 1)"><path d="M0.5 1.5 Q0.5 0.5 1.5 0.5 H4 L5 1.5 H9 Q9.5 1.5 9.5 2.5 V8.5 H0.5 Z" fill="#f5d552" stroke="#c08a1a" stroke-width="1"/><rect x="1" y="4" width="8" height="2.5" fill="#fff6c0"/><path d="M0.5 3 H9.5" stroke="#c08a1a" stroke-width="0.8"/></g><g transform="translate(10 12)"><path d="M0.5 1.5 Q0.5 0.5 1.5 0.5 H4 L5 1.5 H9 Q9.5 1.5 9.5 2.5 V8.5 H0.5 Z" fill="#f5d552" stroke="#c08a1a" stroke-width="1"/><rect x="1" y="4" width="8" height="2.5" fill="#fff6c0"/><path d="M0.5 3 H9.5" stroke="#c08a1a" stroke-width="0.8"/></g><rect x="4" y="11" width="1" height="1" fill="#000"/><rect x="4" y="13" width="1" height="1" fill="#000"/><rect x="4" y="15" width="1" height="1" fill="#000"/><rect x="4" y="17" width="1" height="1" fill="#000"/><rect x="6" y="17" width="1" height="1" fill="#000"/><rect x="8" y="17" width="1" height="1" fill="#000"/></svg>
<svg style="position:absolute;left:814px;top:75px;overflow:visible" width="4" height="18" viewBox="0 0 4 18"><rect x="0" y="0" width="4" height="1" fill="#a8a8a8"/><rect x="0" y="3" width="4" height="1" fill="#a8a8a8"/><rect x="0" y="6" width="4" height="1" fill="#a8a8a8"/><rect x="0" y="9" width="4" height="1" fill="#a8a8a8"/><rect x="0" y="12" width="4" height="1" fill="#a8a8a8"/><rect x="0" y="15" width="4" height="1" fill="#a8a8a8"/></svg>
<svg style="position:absolute;left:823px;top:74px;overflow:visible" width="19" height="21" viewBox="0 0 19 21"><path d="M6.5 0.5 H14.5 L17.5 3.5 V14 H6.5 Z" fill="#f6f6f6" stroke="#a9a9a9"/><path d="M8.5 3.5 H12.5 M8.5 5.5 H16 M8.5 7.5 H16 M8.5 9.5 H16" stroke="#b5b5b5"/><path d="M0.5 5.5 H10 V20 H0.5 Z" fill="#f6f6f6" stroke="#a9a9a9"/><path d="M2.5 8.5 H8.5 M2.5 10.5 H8.5 M2.5 12.5 H8.5 M2.5 14.5 H8.5 M2.5 16.5 H8.5" stroke="#b5b5b5"/><path d="M18 11 L13.5 15.5 L16.5 18.5 H8 V10 L11 13 L15.5 8.5 Z" fill="#c9c9c9" stroke="#a0a0a0" stroke-width="0.9"/></svg>
<span style="position:absolute;top:76px;height:17px;line-height:17px;font-size:15px;color:#ababab;white-space:pre;left:850px;transform-origin:0 0;transform:scaleX(1.0193);">Download</span>
<svg style="position:absolute;left:926px;top:83px;overflow:visible" width="8" height="4" viewBox="0 0 8 4"><path d="M0 0 H8 L4.0 4 Z" fill="#b0b0b0"/></svg>
<div style="position:absolute;left:942px;top:71px;width:1px;height:25px;background:#c8c8c8;"></div>
<svg style="position:absolute;left:949px;top:74px;overflow:visible" width="21" height="20" viewBox="0 0 21 20"><path d="M1.5 2.5 H15 V19.5 H1.5 Z" fill="#f3f3f3" stroke="#c4c4c4"/><path d="M6 15 L17 3 L20 5.5 L9 17.5 L5.5 18.5 Z" fill="#dcdcdc" stroke="#b0b0b0" stroke-width="0.8"/></svg>
<span style="position:absolute;top:76px;height:17px;line-height:17px;font-size:15px;color:#ababab;white-space:pre;left:976px;transform-origin:0 0;transform:scaleX(1.0059);">Edit</span>
<svg style="position:absolute;left:1010px;top:83px;overflow:visible" width="8" height="4" viewBox="0 0 8 4"><path d="M0 0 H8 L4.0 4 Z" fill="#b0b0b0"/></svg>
<svg style="position:absolute;left:1026px;top:75px;overflow:visible" width="18" height="18" viewBox="0 0 18 18"><path d="M1 3.5 L3.5 1 L9 6.5 L14.5 1 L17 3.5 L11.5 9 L17 14.5 L14.5 17 L9 11.5 L3.5 17 L1 14.5 L6.5 9 Z" fill="#c6c6c6" stroke="#b0b0b0" stroke-width="0.7"/></svg>
<svg style="position:absolute;left:1053px;top:74px;overflow:visible" width="19" height="20" viewBox="0 0 19 20"><path d="M1.5 1.5 H11 L14 4.5 V17.5 H1.5 Z" fill="#f2f2f2" stroke="#c4c4c4"/><path d="M0.5 19 H8" stroke="#c4c4c4"/><path d="M8 16.5 L16 3.5 L18.5 5 L10.5 18 L7.5 19.5 Z" fill="#d8d8d8" stroke="#b8b8b8" stroke-width="0.8"/><path d="M16 3.5 L17 1.8 L19 3 L18.5 5 Z" fill="#c8c8c8"/></svg>
<svg style="position:absolute;left:1080px;top:74px;overflow:visible" width="20" height="21" viewBox="0 0 20 21"><path d="M1.5 0.5 H10 L13 3.5 V16 H1.5 Z" fill="#f2f2f2" stroke="#c4c4c4"/><path d="M6.5 8.5 H18.5 V20.5 H6.5 Z" fill="#fff" stroke="#c4c4c4"/><path d="M9 14.5 L11.5 17.5 L16.5 11" stroke="#bdbdbd" stroke-width="2" fill="none"/></svg>
<span style="position:absolute;top:76px;height:17px;line-height:17px;font-size:15px;color:#ababab;white-space:pre;left:1106px;transform-origin:0 0;transform:scaleX(0.9800);">Properties</span>
<div style="position:absolute;left:1182px;top:71px;width:1px;height:25px;background:#c8c8c8;"></div>
<svg style="position:absolute;left:1189px;top:74px;overflow:visible" width="21" height="20" viewBox="0 0 21 20"><path d="M1 4.5 H6 L7.5 3 H12 V19 H1 Z" fill="#f7dc6c" stroke="#c9961a"/><path d="M1 8 H17 V19 H1 Z" fill="#fbe68a" stroke="#c9961a"/><path d="M1.5 15 H16.5" stroke="#eed060"/><path d="M16 0.3 L17.2 2.8 L20 2.5 L18.4 4.8 L20 7 L17.2 6.7 L16 9.3 L14.8 6.7 L12 7 L13.6 4.8 L12 2.5 L14.8 2.8 Z" fill="#fff" stroke="#6f9fd8" stroke-width="0.9"/></svg>
<span style="position:absolute;top:76px;height:17px;line-height:17px;font-size:15px;color:#000;white-space:pre;left:1217px;transform-origin:0 0;">New</span>
<svg style="position:absolute;left:1251px;top:83px;overflow:visible" width="8" height="4" viewBox="0 0 8 4"><path d="M0 0 H8 L4.0 4 Z" fill="#000"/></svg>
<svg style="position:absolute;left:1271px;top:75px;overflow:visible" width="4" height="18" viewBox="0 0 4 18"><rect x="0" y="0" width="4" height="1" fill="#a8a8a8"/><rect x="0" y="3" width="4" height="1" fill="#a8a8a8"/><rect x="0" y="6" width="4" height="1" fill="#a8a8a8"/><rect x="0" y="9" width="4" height="1" fill="#a8a8a8"/><rect x="0" y="12" width="4" height="1" fill="#a8a8a8"/><rect x="0" y="15" width="4" height="1" fill="#a8a8a8"/></svg>
<svg style="position:absolute;left:1280px;top:75px;overflow:visible" width="18" height="18" viewBox="0 0 18 18"><rect x="0.65" y="0.65" width="16.7" height="16.7" fill="#f2f6fc" stroke="#4a6b9c" stroke-width="1.3"/><path d="M9 4 V14 M4 9 H14" stroke="#4a6b9c" stroke-width="2.2"/></svg>
<svg style="position:absolute;left:1307px;top:75px;overflow:visible" width="18" height="18" viewBox="0 0 18 18"><rect x="0.65" y="0.65" width="16.7" height="16.7" fill="#f0f0f0" stroke="#c6c6c6" stroke-width="1.3"/><path d="M4 9 H14" stroke="#c6c6c6" stroke-width="2"/></svg>
<svg style="position:absolute;left:1334px;top:75px;overflow:visible" width="18" height="18" viewBox="0 0 18 18"><rect x="0.65" y="0.65" width="16.7" height="16.7" fill="#f2f6fc" stroke="#4a6b9c" stroke-width="1.3"/><path d="M4 3.8 L9 14 L14 3.8" fill="none" stroke="#4a6b9c" stroke-width="2" stroke-linecap="round" stroke-linejoin="round"/><path d="M5.4 7 H12.6" stroke="#4a6b9c" stroke-width="1.7"/></svg>
<div style="position:absolute;left:34px;top:99px;width:768px;height:26px;background:#99b4d1;"></div>
<span style="position:absolute;top:104px;height:17px;line-height:17px;font-size:15px;color:#000;white-space:pre;left:39px;transform-origin:0 0;transform:scaleX(1.0260);">C:\Users\FAM\Documents\Uni\webstuff\introling\</span>
<div style="position:absolute;left:809px;top:99px;width:769px;height:26px;background:#bfcddb;"></div>
<span style="position:absolute;top:104px;height:17px;line-height:17px;font-size:15px;color:#000;white-space:pre;left:814px;transform-origin:0 0;transform:scaleX(1.0558);">/www/morrissey/introling/</span>
<div style="position:absolute;left:34px;top:125px;width:768px;height:511px;background:#ffffff;box-sizing:border-box;border:1px solid #858a91"></div>
<div style="position:absolute;left:809px;top:125px;width:769px;height:511px;background:#ffffff;box-sizing:border-box;border:1px solid #858a91"></div>
<div style="position:absolute;left:37px;top:153px;width:1px;height:481px;background:#d4e5fa;"></div>
<div style="position:absolute;left:330px;top:153px;width:1px;height:481px;background:#e8f0fa;"></div>
<div style="position:absolute;left:518px;top:153px;width:1px;height:481px;background:#e8f0fa;"></div>
<div style="position:absolute;left:668px;top:153px;width:1px;height:481px;background:#e8f0fa;"></div>
<div style="position:absolute;left:756px;top:153px;width:1px;height:481px;background:#e8f0fa;"></div>
<div style="position:absolute;left:330px;top:127px;width:1px;height:26px;background:#e5e5e5;"></div>
<div style="position:absolute;left:518px;top:127px;width:1px;height:26px;background:#e5e5e5;"></div>
<div style="position:absolute;left:668px;top:127px;width:1px;height:26px;background:#e5e5e5;"></div>
<div style="position:absolute;left:756px;top:127px;width:1px;height:26px;background:#e5e5e5;"></div>
<span style="position:absolute;top:132px;height:17px;line-height:17px;font-size:15px;color:#000;white-space:pre;left:43px;transform-origin:0 0;">Name</span>
<span style="position:absolute;top:132px;height:17px;line-height:17px;font-size:15px;color:#000;white-space:pre;left:337px;transform-origin:0 0;transform:scaleX(0.9690);">Changed</span>
<svg style="position:absolute;left:419px;top:128px;overflow:visible" width="10" height="6" viewBox="0 0 10 6"><path d="M0.5 0.5 L5 5 L9.5 0.5" stroke="#7a7a7a" stroke-width="1" fill="none"/></svg>
<span style="position:absolute;top:132px;height:17px;line-height:17px;font-size:15px;color:#000;white-space:pre;left:525px;transform-origin:0 0;transform:scaleX(0.9533);">Type</span>
<span style="position:absolute;top:132px;height:17px;line-height:17px;font-size:15px;color:#000;white-space:pre;left:721.82px;transform-origin:100% 0;transform:scaleX(0.9253);">Size</span>
<svg style="position:absolute;left:43px;top:157px;overflow:visible" width="13" height="17" viewBox="0 0 13 17"><path d="M1 0 H11.5 V10.5 H12.5 V15.5 H2 Z" fill="#f4d068"/><path d="M0 0 L4 2.5 V17 L0 14.5 Z" fill="#fce9ab"/><path d="M3.5 9.5 V13.8 H11" stroke="#2b3a55" stroke-width="1.5" fill="none"/><path d="M0.8 10 L3.5 7 L6.2 10 Z" fill="#2b3a55"/></svg>
<span style="position:absolute;top:157px;height:17px;line-height:17px;font-size:15px;color:#000;white-space:pre;left:62px;transform-origin:0 0;transform:scaleX(0.8399);">..</span>
<span style="position:absolute;top:157px;height:17px;line-height:17px;font-size:15px;color:#000;white-space:pre;left:336.5px;transform-origin:0 0;transform:scaleX(1.0257);">23/09/2020</span>
<span style="position:absolute;top:157px;height:17px;line-height:17px;font-size:15px;color:#000;white-space:pre;left:422.5px;transform-origin:0 0;transform:scaleX(0.9163);">14:43:14</span>
<span style="position:absolute;top:157px;height:17px;line-height:17px;font-size:15px;color:#000;white-space:pre;left:525px;transform-origin:0 0;">Parent directory</span>
<svg style="position:absolute;left:43px;top:181px;overflow:visible" width="13" height="17" viewBox="0 0 13 17"><path d="M1 0 H11.5 V10.5 H12.5 V15.5 H2 Z" fill="#f4d068"/><path d="M0 0 L4 2.5 V17 L0 14.5 Z" fill="#fce9ab"/></svg>
<span style="position:absolute;top:181px;height:17px;line-height:17px;font-size:15px;color:#000;white-space:pre;left:62px;transform-origin:0 0;transform:scaleX(0.9519);">02_What_is_Linguistics</span>
<span style="position:absolute;top:181px;height:17px;line-height:17px;font-size:15px;color:#000;white-space:pre;left:336.5px;transform-origin:0 0;transform:scaleX(1.0257);">23/09/2020</span>
<span style="position:absolute;top:181px;height:17px;line-height:17px;font-size:15px;color:#000;white-space:pre;left:422.5px;transform-origin:0 0;transform:scaleX(0.9163);">14:55:53</span>
<span style="position:absolute;top:181px;height:17px;line-height:17px;font-size:15px;color:#000;white-space:pre;left:525px;transform-origin:0 0;">File folder</span>
<svg style="position:absolute;left:43px;top:205px;overflow:visible" width="13" height="17" viewBox="0 0 13 17"><path d="M1 0 H11.5 V10.5 H12.5 V15.5 H2 Z" fill="#f4d068"/><path d="M0 0 L4 2.5 V17 L0 14.5 Z" fill="#fce9ab"/></svg>
<span style="position:absolute;top:205px;height:17px;line-height:17px;font-size:15px;color:#000;white-space:pre;left:62px;transform-origin:0 0;transform:scaleX(0.9527);">01_What_is_Language</span>
<span style="position:absolute;top:205px;height:17px;line-height:17px;font-size:15px;color:#000;white-space:pre;left:336.5px;transform-origin:0 0;transform:scaleX(1.0257);">16/09/2020</span>
<span style="position:absolute;top:205px;height:17px;line-height:17px;font-size:15px;color:#000;white-space:pre;left:422.5px;transform-origin:0 0;transform:scaleX(0.9163);">17:07:21</span>
<span style="position:absolute;top:205px;height:17px;line-height:17px;font-size:15px;color:#000;white-space:pre;left:525px;transform-origin:0 0;">File folder</span>
<svg style="position:absolute;left:43px;top:229px;overflow:visible" width="13" height="17" viewBox="0 0 13 17"><path d="M1 0 H11.5 V10.5 H12.5 V15.5 H2 Z" fill="#f4d068"/><path d="M0 0 L4 2.5 V17 L0 14.5 Z" fill="#fce9ab"/></svg>
<span style="position:absolute;top:229px;height:17px;line-height:17px;font-size:15px;color:#000;white-space:pre;left:62px;transform-origin:0 0;transform:scaleX(0.9338);">14_Pragmatics_2</span>
<span style="position:absolute;top:229px;height:17px;line-height:17px;font-size:15px;color:#000;white-space:pre;left:336.5px;transform-origin:0 0;transform:scaleX(1.0257);">18/12/2019</span>
<span style="position:absolute;top:229px;height:17px;line-height:17px;font-size:15px;color:#000;white-space:pre;left:422.5px;transform-origin:0 0;transform:scaleX(0.9163);">13:40:28</span>
<span style="position:absolute;top:229px;height:17px;line-height:17px;font-size:15px;color:#000;white-space:pre;left:525px;transform-origin:0 0;">File folder</span>
<svg style="position:absolute;left:43px;top:253px;overflow:visible" width="13" height="17" viewBox="0 0 13 17"><path d="M1 0 H11.5 V10.5 H12.5 V15.5 H2 Z" fill="#f4d068"/><path d="M0 0 L4 2.5 V17 L0 14.5 Z" fill="#fce9ab"/></svg>
<span style="position:absolute;top:253px;height:17px;line-height:17px;font-size:15px;color:#000;white-space:pre;left:62px;transform-origin:0 0;transform:scaleX(0.9338);">13_Pragmatics_1</span>
<span style="position:absolute;top:253px;height:17px;line-height:17px;font-size:15px;color:#000;white-space:pre;left:336.5px;transform-origin:0 0;transform:scaleX(1.0411);">11/12/2019</span>
<span style="position:absolute;top:253px;height:17px;line-height:17px;font-size:15px;color:#000;white-space:pre;left:422.5px;transform-origin:0 0;transform:scaleX(0.9163);">13:57:19</span>
<span style="position:absolute;top:253px;height:17px;line-height:17px;font-size:15px;color:#000;white-space:pre;left:525px;transform-origin:0 0;">File folder</span>
<svg style="position:absolute;left:43px;top:277px;overflow:visible" width="13" height="17" viewBox="0 0 13 17"><path d="M1 0 H11.5 V10.5 H12.5 V15.5 H2 Z" fill="#f4d068"/><path d="M0 0 L4 2.5 V17 L0 14.5 Z" fill="#fce9ab"/></svg>
<span style="position:absolute;top:277px;height:17px;line-height:17px;font-size:15px;color:#000;white-space:pre;left:62px;transform-origin:0 0;transform:scaleX(0.9022);">12_Syntax_2</span>
<span style="position:absolute;top:277px;height:17px;line-height:17px;font-size:15px;color:#000;white-space:pre;left:336.5px;transform-origin:0 0;transform:scaleX(1.0257);">04/12/2019</span>
<span style="position:absolute;top:277px;height:17px;line-height:17px;font-size:15px;color:#000;white-space:pre;left:422.5px;transform-origin:0 0;transform:scaleX(0.9163);">13:27:34</span>
<span style="position:absolute;top:277px;height:17px;line-height:17px;font-size:15px;color:#000;white-space:pre;left:525px;transform-origin:0 0;">File folder</span>
<svg style="position:absolute;left:43px;top:301px;overflow:visible" width="13" height="17" viewBox="0 0 13 17"><path d="M1 0 H11.5 V10.5 H12.5 V15.5 H2 Z" fill="#f4d068"/><path d="M0 0 L4 2.5 V17 L0 14.5 Z" fill="#fce9ab"/></svg>
<span style="position:absolute;top:301px;height:17px;line-height:17px;font-size:15px;color:#000;white-space:pre;left:62px;transform-origin:0 0;transform:scaleX(0.9138);">11_Syntax_1</span>
<span style="position:absolute;top:301px;height:17px;line-height:17px;font-size:15px;color:#000;white-space:pre;left:336.5px;transform-origin:0 0;transform:scaleX(1.0411);">28/11/2019</span>
<span style="position:absolute;top:301px;height:17px;line-height:17px;font-size:15px;color:#000;white-space:pre;left:422.5px;transform-origin:0 0;transform:scaleX(0.9341);">11:22:26</span>
<span style="position:absolute;top:301px;height:17px;line-height:17px;font-size:15px;color:#000;white-space:pre;left:525px;transform-origin:0 0;">File folder</span>
<svg style="position:absolute;left:43px;top:325px;overflow:visible" width="13" height="17" viewBox="0 0 13 17"><path d="M1 0 H11.5 V10.5 H12.5 V15.5 H2 Z" fill="#f4d068"/><path d="M0 0 L4 2.5 V17 L0 14.5 Z" fill="#fce9ab"/></svg>
<span style="position:absolute;top:325px;height:17px;line-height:17px;font-size:15px;color:#000;white-space:pre;left:62px;transform-origin:0 0;transform:scaleX(0.9218);">10_Semantics_2</span>
<span style="position:absolute;top:325px;height:17px;line-height:17px;font-size:15px;color:#000;white-space:pre;left:336.5px;transform-origin:0 0;transform:scaleX(1.0411);">20/11/2019</span>
<span style="position:absolute;top:325px;height:17px;line-height:17px;font-size:15px;color:#000;white-space:pre;left:422.5px;transform-origin:0 0;transform:scaleX(0.9163);">14:04:10</span>
<span style="position:absolute;top:325px;height:17px;line-height:17px;font-size:15px;color:#000;white-space:pre;left:525px;transform-origin:0 0;">File folder</span>
<svg style="position:absolute;left:43px;top:349px;overflow:visible" width="13" height="17" viewBox="0 0 13 17"><path d="M1 0 H11.5 V10.5 H12.5 V15.5 H2 Z" fill="#f4d068"/><path d="M0 0 L4 2.5 V17 L0 14.5 Z" fill="#fce9ab"/></svg>
<span style="position:absolute;top:349px;height:17px;line-height:17px;font-size:15px;color:#000;white-space:pre;left:62px;transform-origin:0 0;transform:scaleX(0.9388);">03_Phonetics_1</span>
<span style="position:absolute;top:349px;height:17px;line-height:17px;font-size:15px;color:#000;white-space:pre;left:336.5px;transform-origin:0 0;transform:scaleX(1.0411);">16/11/2019</span>
<span style="position:absolute;top:349px;height:17px;line-height:17px;font-size:15px;color:#000;white-space:pre;left:422.5px;transform-origin:0 0;transform:scaleX(0.9163);">19:44:03</span>
<span style="position:absolute;top:349px;height:17px;line-height:17px;font-size:15px;color:#000;white-space:pre;left:525px;transform-origin:0 0;">File folder</span>
<svg style="position:absolute;left:43px;top:373px;overflow:visible" width="13" height="17" viewBox="0 0 13 17"><path d="M1 0 H11.5 V10.5 H12.5 V15.5 H2 Z" fill="#f4d068"/><path d="M0 0 L4 2.5 V17 L0 14.5 Z" fill="#fce9ab"/></svg>
<span style="position:absolute;top:373px;height:17px;line-height:17px;font-size:15px;color:#000;white-space:pre;left:62px;transform-origin:0 0;transform:scaleX(0.9218);">09_Semantics_1</span>
<span style="position:absolute;top:373px;height:17px;line-height:17px;font-size:15px;color:#000;white-space:pre;left:336.5px;transform-origin:0 0;transform:scaleX(1.0411);">13/11/2019</span>
<span style="position:absolute;top:373px;height:17px;line-height:17px;font-size:15px;color:#000;white-space:pre;left:422.5px;transform-origin:0 0;transform:scaleX(0.9163);">13:39:17</span>
<span style="position:absolute;top:373px;height:17px;line-height:17px;font-size:15px;color:#000;white-space:pre;left:525px;transform-origin:0 0;">File folder</span>
<svg style="position:absolute;left:43px;top:397px;overflow:visible" width="13" height="17" viewBox="0 0 13 17"><path d="M1 0 H11.5 V10.5 H12.5 V15.5 H2 Z" fill="#f4d068"/><path d="M0 0 L4 2.5 V17 L0 14.5 Z" fill="#fce9ab"/></svg>
<span style="position:absolute;top:397px;height:17px;line-height:17px;font-size:15px;color:#000;white-space:pre;left:62px;transform-origin:0 0;transform:scaleX(0.9909);">08_Morphology_2</span>
<span style="position:absolute;top:397px;height:17px;line-height:17px;font-size:15px;color:#000;white-space:pre;left:336.5px;transform-origin:0 0;transform:scaleX(1.0411);">06/11/2019</span>
<span style="position:absolute;top:397px;height:17px;line-height:17px;font-size:15px;color:#000;white-space:pre;left:422.5px;transform-origin:0 0;transform:scaleX(0.9163);">14:31:38</span>
<span style="position:absolute;top:397px;height:17px;line-height:17px;font-size:15px;color:#000;white-space:pre;left:525px;transform-origin:0 0;">File folder</span>
<svg style="position:absolute;left:43px;top:421px;overflow:visible" width="13" height="17" viewBox="0 0 13 17"><path d="M1 0 H11.5 V10.5 H12.5 V15.5 H2 Z" fill="#f4d068"/><path d="M0 0 L4 2.5 V17 L0 14.5 Z" fill="#fce9ab"/></svg>
<span style="position:absolute;top:421px;height:17px;line-height:17px;font-size:15px;color:#000;white-space:pre;left:62px;transform-origin:0 0;transform:scaleX(0.9909);">07_Morphology_1</span>
<span style="position:absolute;top:421px;height:17px;line-height:17px;font-size:15px;color:#000;white-space:pre;left:336.5px;transform-origin:0 0;transform:scaleX(1.0257);">30/10/2019</span>
<span style="position:absolute;top:421px;height:17px;line-height:17px;font-size:15px;color:#000;white-space:pre;left:422.5px;transform-origin:0 0;transform:scaleX(0.9163);">13:47:43</span>
<span style="position:absolute;top:421px;height:17px;line-height:17px;font-size:15px;color:#000;white-space:pre;left:525px;transform-origin:0 0;">File folder</span>
<svg style="position:absolute;left:43px;top:445px;overflow:visible" width="13" height="17" viewBox="0 0 13 17"><path d="M1 0 H11.5 V10.5 H12.5 V15.5 H2 Z" fill="#f4d068"/><path d="M0 0 L4 2.5 V17 L0 14.5 Z" fill="#fce9ab"/></svg>
<span style="position:absolute;top:445px;height:17px;line-height:17px;font-size:15px;color:#000;white-space:pre;left:62px;transform-origin:0 0;transform:scaleX(0.9680);">06_Phonology_2</span>
<span style="position:absolute;top:445px;height:17px;line-height:17px;font-size:15px;color:#000;white-space:pre;left:336.5px;transform-origin:0 0;transform:scaleX(1.0257);">23/10/2019</span>
<span style="position:absolute;top:445px;height:17px;line-height:17px;font-size:15px;color:#000;white-space:pre;left:422.5px;transform-origin:0 0;transform:scaleX(0.9163);">13:48:01</span>
<span style="position:absolute;top:445px;height:17px;line-height:17px;font-size:15px;color:#000;white-space:pre;left:525px;transform-origin:0 0;">File folder</span>
<svg style="position:absolute;left:43px;top:469px;overflow:visible" width="13" height="17" viewBox="0 0 13 17"><path d="M1 0 H11.5 V10.5 H12.5 V15.5 H2 Z" fill="#f4d068"/><path d="M0 0 L4 2.5 V17 L0 14.5 Z" fill="#fce9ab"/></svg>
<span style="position:absolute;top:469px;height:17px;line-height:17px;font-size:15px;color:#000;white-space:pre;left:62px;transform-origin:0 0;transform:scaleX(0.9680);">05_Phonology_1</span>
<span style="position:absolute;top:469px;height:17px;line-height:17px;font-size:15px;color:#000;white-space:pre;left:336.5px;transform-origin:0 0;transform:scaleX(1.0257);">16/10/2019</span>
<span style="position:absolute;top:469px;height:17px;line-height:17px;font-size:15px;color:#000;white-space:pre;left:422.5px;transform-origin:0 0;transform:scaleX(0.9163);">15:14:42</span>
<span style="position:absolute;top:469px;height:17px;line-height:17px;font-size:15px;color:#000;white-space:pre;left:525px;transform-origin:0 0;">File folder</span>
<svg style="position:absolute;left:43px;top:493px;overflow:visible" width="13" height="17" viewBox="0 0 13 17"><path d="M1 0 H11.5 V10.5 H12.5 V15.5 H2 Z" fill="#f4d068"/><path d="M0 0 L4 2.5 V17 L0 14.5 Z" fill="#fce9ab"/></svg>
<span style="position:absolute;top:493px;height:17px;line-height:17px;font-size:15px;color:#000;white-space:pre;left:62px;transform-origin:0 0;transform:scaleX(0.9388);">04_Phonetics_2</span>
<span style="position:absolute;top:493px;height:17px;line-height:17px;font-size:15px;color:#000;white-space:pre;left:336.5px;transform-origin:0 0;transform:scaleX(1.0257);">09/10/2019</span>
<span style="position:absolute;top:493px;height:17px;line-height:17px;font-size:15px;color:#000;white-space:pre;left:422.5px;transform-origin:0 0;transform:scaleX(0.9163);">13:20:14</span>
<span style="position:absolute;top:493px;height:17px;line-height:17px;font-size:15px;color:#000;white-space:pre;left:525px;transform-origin:0 0;">File folder</span>
<svg style="position:absolute;left:43px;top:517px;overflow:visible" width="13" height="17" viewBox="0 0 13 17"><path d="M1 0 H11.5 V10.5 H12.5 V15.5 H2 Z" fill="#f4d068"/><path d="M0 0 L4 2.5 V17 L0 14.5 Z" fill="#fce9ab"/></svg>
<span style="position:absolute;top:517px;height:17px;line-height:17px;font-size:15px;color:#000;white-space:pre;left:62px;transform-origin:0 0;transform:scaleX(0.9519);">02_What_is_Linguistics</span>
<span style="position:absolute;top:517px;height:17px;line-height:17px;font-size:15px;color:#000;white-space:pre;left:336.5px;transform-origin:0 0;transform:scaleX(1.0257);">25/09/2019</span>
<span style="position:absolute;top:517px;height:17px;line-height:17px;font-size:15px;color:#000;white-space:pre;left:422.5px;transform-origin:0 0;transform:scaleX(0.9163);">21:32:31</span>
<span style="position:absolute;top:517px;height:17px;line-height:17px;font-size:15px;color:#000;white-space:pre;left:525px;transform-origin:0 0;">File folder</span>
<svg style="position:absolute;left:43px;top:541px;overflow:visible" width="14" height="16" viewBox="0 0 14 16"><path d="M0 0 H9.5 L13.5 4 V16 H0 Z" fill="#1f0f3c"/><path d="M9.5 0.5 L13 4 H9.5 Z" fill="#9a5cff"/><circle cx="6.5" cy="9.5" r="4.6" fill="#ff3f5a"/><path d="M2 9 Q2.5 5 5.5 5.5 Q4 7.5 6.5 8 Q8 6 7.5 3.5 Q12 5.5 11 10 Q10 13 7 13 Z" fill="#ff9a1f"/><path d="M7.5 3.5 Q12 5.5 11 10 Q10.5 12 8.5 12.5 Q10.5 9 8 6.5 Z" fill="#ffd43a"/><circle cx="6.2" cy="9.4" r="1.9" fill="#8a3cf0"/></svg>
<span style="position:absolute;top:541px;height:17px;line-height:17px;font-size:15px;color:#000;white-space:pre;left:62px;transform-origin:0 0;transform:scaleX(1.0819);">introling.html</span>
<span style="position:absolute;top:541px;height:17px;line-height:17px;font-size:15px;color:#000;white-space:pre;left:336.5px;transform-origin:0 0;transform:scaleX(1.0257);">23/09/2020</span>
<span style="position:absolute;top:541px;height:17px;line-height:17px;font-size:15px;color:#000;white-space:pre;left:422.5px;transform-origin:0 0;transform:scaleX(0.9163);">14:52:04</span>
<span style="position:absolute;top:541px;height:17px;line-height:17px;font-size:15px;color:#000;white-space:pre;left:525px;transform-origin:0 0;transform:scaleX(0.9650);">Firefox HTML Docu...</span>
<span style="position:absolute;top:541px;height:17px;line-height:17px;font-size:15px;color:#000;white-space:pre;left:709.14px;transform-origin:100% 0;transform:scaleX(0.9055);">16 KB</span>
<svg style="position:absolute;left:40px;top:563px;overflow:visible" width="21" height="21" viewBox="0 0 21 21"><path d="M4.5 2 V0.5 H14.5 L19.5 5.5 V19.5 H9" fill="#fff" stroke="#8c8c8c"/><path d="M14.5 0.5 V5.5 H19.5" fill="none" stroke="#8c8c8c"/><rect x="0" y="2" width="10" height="2" fill="#6a6a6a"/><path d="M1.5 4 V9.5 H8.5 V4" fill="#fff" stroke="#7a7a7a"/><rect x="4.5" y="10" width="1.2" height="2.2" fill="#7a7a7a"/><rect x="2" y="12.2" width="6" height="1" fill="#7a7a7a"/><path d="M5.1 20 V15 M2.8 17 L5.1 14.6 L7.4 17" stroke="#d4381e" stroke-width="1.3" fill="none"/></svg>
<span style="position:absolute;top:565px;height:17px;line-height:17px;font-size:15px;color:#000;white-space:pre;left:62px;transform-origin:0 0;transform:scaleX(0.9564);">02_What_is_Linguistics.ppsx</span>
<span style="position:absolute;top:565px;height:17px;line-height:17px;font-size:15px;color:#000;white-space:pre;left:336.5px;transform-origin:0 0;transform:scaleX(1.0257);">23/09/2020</span>
<span style="position:absolute;top:565px;height:17px;line-height:17px;font-size:15px;color:#000;white-space:pre;left:422.5px;transform-origin:0 0;transform:scaleX(0.9163);">14:43:09</span>
<span style="position:absolute;top:565px;height:17px;line-height:17px;font-size:15px;color:#000;white-space:pre;left:525px;transform-origin:0 0;transform:scaleX(0.9668);">Microsoft PowerPoi...</span>
<span style="position:absolute;top:565px;height:17px;line-height:17px;font-size:15px;color:#000;white-space:pre;left:688.29px;transform-origin:100% 0;transform:scaleX(0.9074);">2,893 KB</span>
<svg style="position:absolute;left:40px;top:589px;overflow:visible" width="20" height="20" viewBox="0 0 20 20"><rect x="6" y="2" width="13.5" height="17.5" fill="#e6e6e6"/><path d="M5.5 1 H16 L18.5 3.5 V18.5 H5.5 Z" fill="#fff" stroke="#d4d4d4" stroke-width="1"/><rect x="1" y="0" width="13.5" height="5.5" fill="#b3162c"/><rect x="3" y="1.5" width="2.5" height="2.5" fill="#f4d6da"/><rect x="6.5" y="1.5" width="2.5" height="2.5" fill="#f4d6da"/><rect x="10" y="1.5" width="2.5" height="2.5" fill="#f4d6da"/><path d="M11 6 Q12 10 7.5 15.5 M9 12 Q13 10.5 17 11.5" stroke="#c8202e" stroke-width="1.5" fill="none"/></svg>
<span style="position:absolute;top:589px;height:17px;line-height:17px;font-size:15px;color:#000;white-space:pre;left:62px;transform-origin:0 0;transform:scaleX(0.9487);">Script_ItL_Podcast_2.pdf</span>
<span style="position:absolute;top:589px;height:17px;line-height:17px;font-size:15px;color:#000;white-space:pre;left:336.5px;transform-origin:0 0;transform:scaleX(1.0257);">21/09/2020</span>
<span style="position:absolute;top:589px;height:17px;line-height:17px;font-size:15px;color:#000;white-space:pre;left:422.5px;transform-origin:0 0;transform:scaleX(0.9163);">18:01:21</span>
<span style="position:absolute;top:589px;height:17px;line-height:17px;font-size:15px;color:#000;white-space:pre;left:525px;transform-origin:0 0;transform:scaleX(1.0205);">Adobe Acrobat Do...</span>
<span style="position:absolute;top:589px;height:17px;line-height:17px;font-size:15px;color:#000;white-space:pre;left:700.80px;transform-origin:100% 0;transform:scaleX(0.9146);">254 KB</span>
<svg style="position:absolute;left:40px;top:611px;overflow:visible" width="21" height="21" viewBox="0 0 21 21"><path d="M4.5 2 V0.5 H14.5 L19.5 5.5 V19.5 H9" fill="#fff" stroke="#8c8c8c"/><path d="M14.5 0.5 V5.5 H19.5" fill="none" stroke="#8c8c8c"/><rect x="0" y="2" width="10" height="2" fill="#6a6a6a"/><path d="M1.5 4 V9.5 H8.5 V4" fill="#fff" stroke="#7a7a7a"/><rect x="4.5" y="10" width="1.2" height="2.2" fill="#7a7a7a"/><rect x="2" y="12.2" width="6" height="1" fill="#7a7a7a"/><path d="M5.1 20 V15 M2.8 17 L5.1 14.6 L7.4 17" stroke="#d4381e" stroke-width="1.3" fill="none"/></svg>
<span style="position:absolute;top:613px;height:17px;line-height:17px;font-size:15px;color:#000;white-space:pre;left:62px;transform-origin:0 0;transform:scaleX(0.9572);">01_What_is_Language.ppsx</span>
<span style="position:absolute;top:613px;height:17px;line-height:17px;font-size:15px;color:#000;white-space:pre;left:336.5px;transform-origin:0 0;transform:scaleX(1.0257);">16/09/2020</span>
<span style="position:absolute;top:613px;height:17px;line-height:17px;font-size:15px;color:#000;white-space:pre;left:422.5px;transform-origin:0 0;transform:scaleX(0.9163);">18:03:05</span>
<span style="position:absolute;top:613px;height:17px;line-height:17px;font-size:15px;color:#000;white-space:pre;left:525px;transform-origin:0 0;transform:scaleX(0.9668);">Microsoft PowerPoi...</span>
<span style="position:absolute;top:613px;height:17px;line-height:17px;font-size:15px;color:#000;white-space:pre;left:688.29px;transform-origin:100% 0;transform:scaleX(0.9074);">2,624 KB</span>
<div style="position:absolute;left:61px;top:178px;width:155px;height:22px;background:transparent;box-sizing:border-box;border:1px dotted #000"></div>
<div style="position:absolute;left:780px;top:126px;width:20px;height:508px;background:#f0f0f0;"></div>
<div style="position:absolute;left:780px;top:148px;width:19px;height:104px;background:#cdcdcd;"></div>
<svg style="position:absolute;left:784px;top:133px;overflow:visible" width="10" height="8" viewBox="0 0 10 8"><path d="M1 7 L5 2.5 L9 7" stroke="#606060" stroke-width="2.3" fill="none"/></svg>
<svg style="position:absolute;left:784px;top:619px;overflow:visible" width="10" height="8" viewBox="0 0 10 8"><path d="M1 1 L5 5.5 L9 1" stroke="#606060" stroke-width="2.3" fill="none"/></svg>
<div style="position:absolute;left:812px;top:153px;width:1px;height:460px;background:#d4e5fa;"></div>
<div style="position:absolute;left:1145px;top:153px;width:1px;height:460px;background:#e8f0fa;"></div>
<div style="position:absolute;left:1233px;top:153px;width:1px;height:460px;background:#e8f0fa;"></div>
<div style="position:absolute;left:1422px;top:153px;width:1px;height:460px;background:#e8f0fa;"></div>
<div style="position:absolute;left:1520px;top:153px;width:1px;height:460px;background:#e8f0fa;"></div>
<div style="position:absolute;left:1145px;top:127px;width:1px;height:26px;background:#e5e5e5;"></div>
<div style="position:absolute;left:1233px;top:127px;width:1px;height:26px;background:#e5e5e5;"></div>
<div style="position:absolute;left:1422px;top:127px;width:1px;height:26px;background:#e5e5e5;"></div>
<div style="position:absolute;left:1520px;top:127px;width:1px;height:26px;background:#e5e5e5;"></div>
<span style="position:absolute;top:132px;height:17px;line-height:17px;font-size:15px;color:#000;white-space:pre;left:818px;transform-origin:0 0;">Name</span>
<svg style="position:absolute;left:973px;top:128px;overflow:visible" width="10" height="6" viewBox="0 0 10 6"><path d="M0.5 5 L5 0.5 L9.5 5" stroke="#7a7a7a" stroke-width="1" fill="none"/></svg>
<span style="position:absolute;top:132px;height:17px;line-height:17px;font-size:15px;color:#000;white-space:pre;left:1197.82px;transform-origin:100% 0;transform:scaleX(0.9253);">Size</span>
<span style="position:absolute;top:132px;height:17px;line-height:17px;font-size:15px;color:#000;white-space:pre;left:1240px;transform-origin:0 0;transform:scaleX(0.9690);">Changed</span>
<span style="position:absolute;top:132px;height:17px;line-height:17px;font-size:15px;color:#000;white-space:pre;left:1428px;transform-origin:0 0;transform:scaleX(0.9878);">Rights</span>
<div style="position:absolute;left:0;top:0;width:1556px;height:820px;overflow:hidden">
<span style="position:absolute;top:132px;height:17px;line-height:17px;font-size:15px;color:#000;white-space:pre;left:1527px;transform-origin:0 0;transform:scaleX(0.9507);">Owner</span>
<span style="position:absolute;top:157px;height:17px;line-height:17px;font-size:15px;color:#000;white-space:pre;left:1527px;transform-origin:0 0;">fandres</span>
<span style="position:absolute;top:181px;height:17px;line-height:17px;font-size:15px;color:#000;white-space:pre;left:1527px;transform-origin:0 0;">fandres</span>
<span style="position:absolute;top:205px;height:17px;line-height:17px;font-size:15px;color:#000;white-space:pre;left:1527px;transform-origin:0 0;">fandres</span>
<span style="position:absolute;top:229px;height:17px;line-height:17px;font-size:15px;color:#000;white-space:pre;left:1527px;transform-origin:0 0;">fandres</span>
<span style="position:absolute;top:253px;height:17px;line-height:17px;font-size:15px;color:#000;white-space:pre;left:1527px;transform-origin:0 0;">fandres</span>
<span style="position:absolute;top:277px;height:17px;line-height:17px;font-size:15px;color:#000;white-space:pre;left:1527px;transform-origin:0 0;">fandres</span>
<span style="position:absolute;top:301px;height:17px;line-height:17px;font-size:15px;color:#000;white-space:pre;left:1527px;transform-origin:0 0;">fandres</span>
<span style="position:absolute;top:325px;height:17px;line-height:17px;font-size:15px;color:#000;white-space:pre;left:1527px;transform-origin:0 0;">fandres</span>
<span style="position:absolute;top:349px;height:17px;line-height:17px;font-size:15px;color:#000;white-space:pre;left:1527px;transform-origin:0 0;">fandres</span>
<span style="position:absolute;top:373px;height:17px;line-height:17px;font-size:15px;color:#000;white-space:pre;left:1527px;transform-origin:0 0;">fandres</span>
<span style="position:absolute;top:397px;height:17px;line-height:17px;font-size:15px;color:#000;white-space:pre;left:1527px;transform-origin:0 0;">fandres</span>
<span style="position:absolute;top:421px;height:17px;line-height:17px;font-size:15px;color:#000;white-space:pre;left:1527px;transform-origin:0 0;">fandres</span>
<span style="position:absolute;top:445px;height:17px;line-height:17px;font-size:15px;color:#000;white-space:pre;left:1527px;transform-origin:0 0;">fandres</span>
<span style="position:absolute;top:469px;height:17px;line-height:17px;font-size:15px;color:#000;white-space:pre;left:1527px;transform-origin:0 0;">fandres</span>
<span style="position:absolute;top:493px;height:17px;line-height:17px;font-size:15px;color:#000;white-space:pre;left:1527px;transform-origin:0 0;">fandres</span>
<span style="position:absolute;top:517px;height:17px;line-height:17px;font-size:15px;color:#000;white-space:pre;left:1527px;transform-origin:0 0;">fandres</span>
<span style="position:absolute;top:541px;height:17px;line-height:17px;font-size:15px;color:#000;white-space:pre;left:1527px;transform-origin:0 0;">fandres</span>
<span style="position:absolute;top:565px;height:17px;line-height:17px;font-size:15px;color:#000;white-space:pre;left:1527px;transform-origin:0 0;">fandres</span>
<span style="position:absolute;top:589px;height:17px;line-height:17px;font-size:15px;color:#000;white-space:pre;left:1527px;transform-origin:0 0;">fandres</span>
</div>
<svg style="position:absolute;left:818px;top:157px;overflow:visible" width="13" height="17" viewBox="0 0 13 17"><path d="M1 0 H11.5 V10.5 H12.5 V15.5 H2 Z" fill="#f4d068"/><path d="M0 0 L4 2.5 V17 L0 14.5 Z" fill="#fce9ab"/><path d="M3.5 9.5 V13.8 H11" stroke="#2b3a55" stroke-width="1.5" fill="none"/><path d="M0.8 10 L3.5 7 L6.2 10 Z" fill="#2b3a55"/></svg>
<span style="position:absolute;top:157px;height:17px;line-height:17px;font-size:15px;color:#000;white-space:pre;left:837px;transform-origin:0 0;transform:scaleX(0.8399);">..</span>
<span style="position:absolute;top:157px;height:17px;line-height:17px;font-size:15px;color:#000;white-space:pre;left:1239.5px;transform-origin:0 0;transform:scaleX(0.9882);">09/09/2020 14:31:18</span>
<span style="position:absolute;top:157px;height:17px;line-height:17px;font-size:15px;color:#000;white-space:pre;left:1428px;transform-origin:0 0;transform:scaleX(0.9947);">rwxr-xr-x</span>
<svg style="position:absolute;left:818px;top:181px;overflow:visible" width="13" height="17" viewBox="0 0 13 17"><path d="M1 0 H11.5 V10.5 H12.5 V15.5 H2 Z" fill="#f4d068"/><path d="M0 0 L4 2.5 V17 L0 14.5 Z" fill="#fce9ab"/></svg>
<span style="position:absolute;top:181px;height:17px;line-height:17px;font-size:15px;color:#000;white-space:pre;left:837px;transform-origin:0 0;transform:scaleX(0.9527);">01_What_is_Language</span>
<span style="position:absolute;top:181px;height:17px;line-height:17px;font-size:15px;color:#000;white-space:pre;left:1239.5px;transform-origin:0 0;transform:scaleX(0.9882);">16/09/2020 22:43:09</span>
<span style="position:absolute;top:181px;height:17px;line-height:17px;font-size:15px;color:#000;white-space:pre;left:1428px;transform-origin:0 0;transform:scaleX(0.9821);">rwxrwxr-x</span>
<svg style="position:absolute;left:818px;top:205px;overflow:visible" width="13" height="17" viewBox="0 0 13 17"><path d="M1 0 H11.5 V10.5 H12.5 V15.5 H2 Z" fill="#f4d068"/><path d="M0 0 L4 2.5 V17 L0 14.5 Z" fill="#fce9ab"/></svg>
<span style="position:absolute;top:205px;height:17px;line-height:17px;font-size:15px;color:#000;white-space:pre;left:837px;transform-origin:0 0;transform:scaleX(0.9519);">02_What_is_Linguistics</span>
<span style="position:absolute;top:205px;height:17px;line-height:17px;font-size:15px;color:#000;white-space:pre;left:1239.5px;transform-origin:0 0;transform:scaleX(0.9882);">23/09/2020 14:51:48</span>
<span style="position:absolute;top:205px;height:17px;line-height:17px;font-size:15px;color:#000;white-space:pre;left:1428px;transform-origin:0 0;transform:scaleX(0.9821);">rwxrwxr-x</span>
<svg style="position:absolute;left:818px;top:229px;overflow:visible" width="13" height="17" viewBox="0 0 13 17"><path d="M1 0 H11.5 V10.5 H12.5 V15.5 H2 Z" fill="#f4d068"/><path d="M0 0 L4 2.5 V17 L0 14.5 Z" fill="#fce9ab"/></svg>
<span style="position:absolute;top:229px;height:17px;line-height:17px;font-size:15px;color:#000;white-space:pre;left:837px;transform-origin:0 0;transform:scaleX(0.9388);">03_Phonetics_1</span>
<span style="position:absolute;top:229px;height:17px;line-height:17px;font-size:15px;color:#000;white-space:pre;left:1239.5px;transform-origin:0 0;transform:scaleX(0.9882);">02/10/2019 14:26:12</span>
<span style="position:absolute;top:229px;height:17px;line-height:17px;font-size:15px;color:#000;white-space:pre;left:1428px;transform-origin:0 0;transform:scaleX(0.9821);">rwxrwxr-x</span>
<svg style="position:absolute;left:818px;top:253px;overflow:visible" width="13" height="17" viewBox="0 0 13 17"><path d="M1 0 H11.5 V10.5 H12.5 V15.5 H2 Z" fill="#f4d068"/><path d="M0 0 L4 2.5 V17 L0 14.5 Z" fill="#fce9ab"/></svg>
<span style="position:absolute;top:253px;height:17px;line-height:17px;font-size:15px;color:#000;white-space:pre;left:837px;transform-origin:0 0;transform:scaleX(0.9388);">04_Phonetics_2</span>
<span style="position:absolute;top:253px;height:17px;line-height:17px;font-size:15px;color:#000;white-space:pre;left:1239.5px;transform-origin:0 0;transform:scaleX(0.9882);">09/10/2019 13:48:12</span>
<span style="position:absolute;top:253px;height:17px;line-height:17px;font-size:15px;color:#000;white-space:pre;left:1428px;transform-origin:0 0;transform:scaleX(0.9821);">rwxrwxr-x</span>
<svg style="position:absolute;left:818px;top:277px;overflow:visible" width="13" height="17" viewBox="0 0 13 17"><path d="M1 0 H11.5 V10.5 H12.5 V15.5 H2 Z" fill="#f4d068"/><path d="M0 0 L4 2.5 V17 L0 14.5 Z" fill="#fce9ab"/></svg>
<span style="position:absolute;top:277px;height:17px;line-height:17px;font-size:15px;color:#000;white-space:pre;left:837px;transform-origin:0 0;transform:scaleX(0.8902);">05_MEG1_Pres</span>
<span style="position:absolute;top:277px;height:17px;line-height:17px;font-size:15px;color:#000;white-space:pre;left:1239.5px;transform-origin:0 0;transform:scaleX(0.9882);">15/10/2019 15:59:35</span>
<span style="position:absolute;top:277px;height:17px;line-height:17px;font-size:15px;color:#000;white-space:pre;left:1428px;transform-origin:0 0;transform:scaleX(0.9821);">rwxrwxr-x</span>
<svg style="position:absolute;left:818px;top:301px;overflow:visible" width="13" height="17" viewBox="0 0 13 17"><path d="M1 0 H11.5 V10.5 H12.5 V15.5 H2 Z" fill="#f4d068"/><path d="M0 0 L4 2.5 V17 L0 14.5 Z" fill="#fce9ab"/></svg>
<span style="position:absolute;top:301px;height:17px;line-height:17px;font-size:15px;color:#000;white-space:pre;left:837px;transform-origin:0 0;transform:scaleX(0.9680);">05_Phonology_1</span>
<span style="position:absolute;top:301px;height:17px;line-height:17px;font-size:15px;color:#000;white-space:pre;left:1239.5px;transform-origin:0 0;transform:scaleX(0.9882);">16/10/2019 16:13:45</span>
<span style="position:absolute;top:301px;height:17px;line-height:17px;font-size:15px;color:#000;white-space:pre;left:1428px;transform-origin:0 0;transform:scaleX(0.9821);">rwxrwxr-x</span>
<svg style="position:absolute;left:818px;top:325px;overflow:visible" width="13" height="17" viewBox="0 0 13 17"><path d="M1 0 H11.5 V10.5 H12.5 V15.5 H2 Z" fill="#f4d068"/><path d="M0 0 L4 2.5 V17 L0 14.5 Z" fill="#fce9ab"/></svg>
<span style="position:absolute;top:325px;height:17px;line-height:17px;font-size:15px;color:#000;white-space:pre;left:837px;transform-origin:0 0;transform:scaleX(0.9680);">06_Phonology_2</span>
<span style="position:absolute;top:325px;height:17px;line-height:17px;font-size:15px;color:#000;white-space:pre;left:1239.5px;transform-origin:0 0;transform:scaleX(0.9882);">23/10/2019 14:55:35</span>
<span style="position:absolute;top:325px;height:17px;line-height:17px;font-size:15px;color:#000;white-space:pre;left:1428px;transform-origin:0 0;transform:scaleX(0.9821);">rwxrwxr-x</span>
<svg style="position:absolute;left:818px;top:349px;overflow:visible" width="13" height="17" viewBox="0 0 13 17"><path d="M1 0 H11.5 V10.5 H12.5 V15.5 H2 Z" fill="#f4d068"/><path d="M0 0 L4 2.5 V17 L0 14.5 Z" fill="#fce9ab"/></svg>
<span style="position:absolute;top:349px;height:17px;line-height:17px;font-size:15px;color:#000;white-space:pre;left:837px;transform-origin:0 0;transform:scaleX(0.9909);">07_Morphology_1</span>
<span style="position:absolute;top:349px;height:17px;line-height:17px;font-size:15px;color:#000;white-space:pre;left:1239.5px;transform-origin:0 0;transform:scaleX(0.9882);">31/10/2019 08:17:15</span>
<span style="position:absolute;top:349px;height:17px;line-height:17px;font-size:15px;color:#000;white-space:pre;left:1428px;transform-origin:0 0;transform:scaleX(0.9821);">rwxrwxr-x</span>
<svg style="position:absolute;left:818px;top:373px;overflow:visible" width="13" height="17" viewBox="0 0 13 17"><path d="M1 0 H11.5 V10.5 H12.5 V15.5 H2 Z" fill="#f4d068"/><path d="M0 0 L4 2.5 V17 L0 14.5 Z" fill="#fce9ab"/></svg>
<span style="position:absolute;top:373px;height:17px;line-height:17px;font-size:15px;color:#000;white-space:pre;left:837px;transform-origin:0 0;transform:scaleX(0.9909);">08_Morphology_2</span>
<span style="position:absolute;top:373px;height:17px;line-height:17px;font-size:15px;color:#000;white-space:pre;left:1239.5px;transform-origin:0 0;">06/11/2019 15:50:05</span>
<span style="position:absolute;top:373px;height:17px;line-height:17px;font-size:15px;color:#000;white-space:pre;left:1428px;transform-origin:0 0;transform:scaleX(0.9821);">rwxrwxr-x</span>
<svg style="position:absolute;left:818px;top:397px;overflow:visible" width="13" height="17" viewBox="0 0 13 17"><path d="M1 0 H11.5 V10.5 H12.5 V15.5 H2 Z" fill="#f4d068"/><path d="M0 0 L4 2.5 V17 L0 14.5 Z" fill="#fce9ab"/></svg>
<span style="position:absolute;top:397px;height:17px;line-height:17px;font-size:15px;color:#000;white-space:pre;left:837px;transform-origin:0 0;transform:scaleX(0.9218);">09_Semantics_1</span>
<span style="position:absolute;top:397px;height:17px;line-height:17px;font-size:15px;color:#000;white-space:pre;left:1239.5px;transform-origin:0 0;">13/11/2019 14:22:18</span>
<span style="position:absolute;top:397px;height:17px;line-height:17px;font-size:15px;color:#000;white-space:pre;left:1428px;transform-origin:0 0;transform:scaleX(0.9821);">rwxrwxr-x</span>
<svg style="position:absolute;left:818px;top:421px;overflow:visible" width="13" height="17" viewBox="0 0 13 17"><path d="M1 0 H11.5 V10.5 H12.5 V15.5 H2 Z" fill="#f4d068"/><path d="M0 0 L4 2.5 V17 L0 14.5 Z" fill="#fce9ab"/></svg>
<span style="position:absolute;top:421px;height:17px;line-height:17px;font-size:15px;color:#000;white-space:pre;left:837px;transform-origin:0 0;transform:scaleX(0.9218);">10_Semantics_2</span>
<span style="position:absolute;top:421px;height:17px;line-height:17px;font-size:15px;color:#000;white-space:pre;left:1239.5px;transform-origin:0 0;">20/11/2019 14:06:08</span>
<span style="position:absolute;top:421px;height:17px;line-height:17px;font-size:15px;color:#000;white-space:pre;left:1428px;transform-origin:0 0;transform:scaleX(0.9821);">rwxrwxr-x</span>
<svg style="position:absolute;left:818px;top:445px;overflow:visible" width="13" height="17" viewBox="0 0 13 17"><path d="M1 0 H11.5 V10.5 H12.5 V15.5 H2 Z" fill="#f4d068"/><path d="M0 0 L4 2.5 V17 L0 14.5 Z" fill="#fce9ab"/></svg>
<span style="position:absolute;top:445px;height:17px;line-height:17px;font-size:15px;color:#000;white-space:pre;left:837px;transform-origin:0 0;transform:scaleX(0.9138);">11_Syntax_1</span>
<span style="position:absolute;top:445px;height:17px;line-height:17px;font-size:15px;color:#000;white-space:pre;left:1239.5px;transform-origin:0 0;">28/11/2019 11:56:26</span>
<span style="position:absolute;top:445px;height:17px;line-height:17px;font-size:15px;color:#000;white-space:pre;left:1428px;transform-origin:0 0;transform:scaleX(0.9821);">rwxrwxr-x</span>
<svg style="position:absolute;left:818px;top:469px;overflow:visible" width="13" height="17" viewBox="0 0 13 17"><path d="M1 0 H11.5 V10.5 H12.5 V15.5 H2 Z" fill="#f4d068"/><path d="M0 0 L4 2.5 V17 L0 14.5 Z" fill="#fce9ab"/></svg>
<span style="position:absolute;top:469px;height:17px;line-height:17px;font-size:15px;color:#000;white-space:pre;left:837px;transform-origin:0 0;transform:scaleX(0.9022);">12_Syntax_2</span>
<span style="position:absolute;top:469px;height:17px;line-height:17px;font-size:15px;color:#000;white-space:pre;left:1239.5px;transform-origin:0 0;transform:scaleX(0.9882);">04/12/2019 13:37:22</span>
<span style="position:absolute;top:469px;height:17px;line-height:17px;font-size:15px;color:#000;white-space:pre;left:1428px;transform-origin:0 0;transform:scaleX(0.9821);">rwxrwxr-x</span>
<svg style="position:absolute;left:818px;top:493px;overflow:visible" width="13" height="17" viewBox="0 0 13 17"><path d="M1 0 H11.5 V10.5 H12.5 V15.5 H2 Z" fill="#f4d068"/><path d="M0 0 L4 2.5 V17 L0 14.5 Z" fill="#fce9ab"/></svg>
<span style="position:absolute;top:493px;height:17px;line-height:17px;font-size:15px;color:#000;white-space:pre;left:837px;transform-origin:0 0;transform:scaleX(0.9338);">13_Pragmatics_1</span>
<span style="position:absolute;top:493px;height:17px;line-height:17px;font-size:15px;color:#000;white-space:pre;left:1239.5px;transform-origin:0 0;">11/12/2019 15:13:10</span>
<span style="position:absolute;top:493px;height:17px;line-height:17px;font-size:15px;color:#000;white-space:pre;left:1428px;transform-origin:0 0;transform:scaleX(0.9821);">rwxrwxr-x</span>
<svg style="position:absolute;left:818px;top:517px;overflow:visible" width="13" height="17" viewBox="0 0 13 17"><path d="M1 0 H11.5 V10.5 H12.5 V15.5 H2 Z" fill="#f4d068"/><path d="M0 0 L4 2.5 V17 L0 14.5 Z" fill="#fce9ab"/></svg>
<span style="position:absolute;top:517px;height:17px;line-height:17px;font-size:15px;color:#000;white-space:pre;left:837px;transform-origin:0 0;transform:scaleX(0.9338);">14_Pragmatics_2</span>
<span style="position:absolute;top:517px;height:17px;line-height:17px;font-size:15px;color:#000;white-space:pre;left:1239.5px;transform-origin:0 0;transform:scaleX(0.9882);">18/12/2019 14:04:26</span>
<span style="position:absolute;top:517px;height:17px;line-height:17px;font-size:15px;color:#000;white-space:pre;left:1428px;transform-origin:0 0;transform:scaleX(0.9821);">rwxrwxr-x</span>
<svg style="position:absolute;left:815px;top:541px;overflow:visible" width="20" height="20" viewBox="0 0 20 20"><rect x="6" y="2" width="13.5" height="17.5" fill="#e6e6e6"/><path d="M5.5 1 H16 L18.5 3.5 V18.5 H5.5 Z" fill="#fff" stroke="#d4d4d4" stroke-width="1"/><rect x="1" y="0" width="13.5" height="5.5" fill="#b3162c"/><rect x="3" y="1.5" width="2.5" height="2.5" fill="#f4d6da"/><rect x="6.5" y="1.5" width="2.5" height="2.5" fill="#f4d6da"/><rect x="10" y="1.5" width="2.5" height="2.5" fill="#f4d6da"/><path d="M11 6 Q12 10 7.5 15.5 M9 12 Q13 10.5 17 11.5" stroke="#c8202e" stroke-width="1.5" fill="none"/></svg>
<span style="position:absolute;top:541px;height:17px;line-height:17px;font-size:15px;color:#000;white-space:pre;left:837px;transform-origin:0 0;transform:scaleX(0.9655);">00_Exam_learning_goals_min.pdf</span>
<span style="position:absolute;top:541px;height:17px;line-height:17px;font-size:15px;color:#000;white-space:pre;left:1186.14px;transform-origin:100% 0;transform:scaleX(0.9055);">23 KB</span>
<span style="position:absolute;top:541px;height:17px;line-height:17px;font-size:15px;color:#000;white-space:pre;left:1239.5px;transform-origin:0 0;transform:scaleX(0.9882);">16/12/2013 14:45:12</span>
<span style="position:absolute;top:541px;height:17px;line-height:17px;font-size:15px;color:#000;white-space:pre;left:1428px;transform-origin:0 0;transform:scaleX(1.0595);">rw-rw-r--</span>
<svg style="position:absolute;left:815px;top:563px;overflow:visible" width="20" height="20" viewBox="0 0 20 20"><path d="M4.5 0.5 H13.5 L19.5 6 V19.5 H4.5 Z" fill="#fff" stroke="#9c9c9c"/><path d="M13.5 0.5 V6 H19.5" fill="none" stroke="#b0b0b0"/><rect x="11" y="3" width="1.5" height="3" fill="#f2a585"/><rect x="8" y="3.5" width="2" height="1" fill="#555"/><path d="M11 8 H14 L12.5 12 H11 Z" fill="#555"/><rect x="11" y="13" width="4" height="1" fill="#f2a585"/><rect x="11" y="15" width="4" height="1" fill="#f2a585"/><rect x="0.5" y="6.5" width="11" height="11" fill="#fff" stroke="#d4461c"/><rect x="2" y="8" width="8" height="8" fill="#d4461c"/><path d="M6 9.8 A2.4 2.4 0 1 0 8.4 12.2 H6 Z" fill="#fff"/><circle cx="7.6" cy="10.4" r="0.8" fill="#fff"/></svg>
<span style="position:absolute;top:565px;height:17px;line-height:17px;font-size:15px;color:#000;white-space:pre;left:837px;transform-origin:0 0;transform:scaleX(0.9458);">00_Introduction_to_Library_Research_Student...</span>
<span style="position:absolute;top:565px;height:17px;line-height:17px;font-size:15px;color:#000;white-space:pre;left:1165.29px;transform-origin:100% 0;transform:scaleX(0.9074);">2,150 KB</span>
<span style="position:absolute;top:565px;height:17px;line-height:17px;font-size:15px;color:#000;white-space:pre;left:1239.5px;transform-origin:0 0;transform:scaleX(0.9882);">25/09/2012 20:57:52</span>
<span style="position:absolute;top:565px;height:17px;line-height:17px;font-size:15px;color:#000;white-space:pre;left:1428px;transform-origin:0 0;transform:scaleX(1.0595);">rw-rw-r--</span>
<svg style="position:absolute;left:815px;top:589px;overflow:visible" width="20" height="20" viewBox="0 0 20 20"><rect x="6" y="2" width="13.5" height="17.5" fill="#e6e6e6"/><path d="M5.5 1 H16 L18.5 3.5 V18.5 H5.5 Z" fill="#fff" stroke="#d4d4d4" stroke-width="1"/><rect x="1" y="0" width="13.5" height="5.5" fill="#b3162c"/><rect x="3" y="1.5" width="2.5" height="2.5" fill="#f4d6da"/><rect x="6.5" y="1.5" width="2.5" height="2.5" fill="#f4d6da"/><rect x="10" y="1.5" width="2.5" height="2.5" fill="#f4d6da"/><path d="M11 6 Q12 10 7.5 15.5 M9 12 Q13 10.5 17 11.5" stroke="#c8202e" stroke-width="1.5" fill="none"/></svg>
<span style="position:absolute;top:589px;height:17px;line-height:17px;font-size:15px;color:#000;white-space:pre;left:837px;transform-origin:0 0;transform:scaleX(0.9580);">00_Mock_Exam.pdf</span>
<span style="position:absolute;top:589px;height:17px;line-height:17px;font-size:15px;color:#000;white-space:pre;left:1177.80px;transform-origin:100% 0;transform:scaleX(0.9146);">127 KB</span>
<span style="position:absolute;top:589px;height:17px;line-height:17px;font-size:15px;color:#000;white-space:pre;left:1239.5px;transform-origin:0 0;transform:scaleX(0.9882);">06/10/2019 16:05:13</span>
<span style="position:absolute;top:589px;height:17px;line-height:17px;font-size:15px;color:#000;white-space:pre;left:1428px;transform-origin:0 0;transform:scaleX(1.0595);">rw-rw-r--</span>
<div style="position:absolute;left:815px;top:610px;width:30px;height:4px;overflow:hidden">
<svg style="position:absolute;left:815px;top:612px;overflow:visible" width="20" height="20" viewBox="0 0 20 20"><rect x="6" y="2" width="13.5" height="17.5" fill="#e6e6e6"/><path d="M5.5 1 H16 L18.5 3.5 V18.5 H5.5 Z" fill="#fff" stroke="#d4d4d4" stroke-width="1"/><rect x="1" y="0" width="13.5" height="5.5" fill="#b3162c"/><rect x="3" y="1.5" width="2.5" height="2.5" fill="#f4d6da"/><rect x="6.5" y="1.5" width="2.5" height="2.5" fill="#f4d6da"/><rect x="10" y="1.5" width="2.5" height="2.5" fill="#f4d6da"/><path d="M11 6 Q12 10 7.5 15.5 M9 12 Q13 10.5 17 11.5" stroke="#c8202e" stroke-width="1.5" fill="none"/></svg>
</div>
<div style="position:absolute;left:815px;top:612px;width:15px;height:1px;background:#e8c4c8;"></div>
<div style="position:absolute;left:1556px;top:126px;width:20px;height:488px;background:#f0f0f0;"></div>
<div style="position:absolute;left:1556px;top:148px;width:20px;height:88px;background:#cdcdcd;"></div>
<svg style="position:absolute;left:1561px;top:133px;overflow:visible" width="10" height="8" viewBox="0 0 10 8"><path d="M1 7 L5 2.5 L9 7" stroke="#606060" stroke-width="2.3" fill="none"/></svg>
<svg style="position:absolute;left:1561px;top:598px;overflow:visible" width="10" height="8" viewBox="0 0 10 8"><path d="M1 1 L5 5.5 L9 1" stroke="#606060" stroke-width="2.3" fill="none"/></svg>
<div style="position:absolute;left:810px;top:614px;width:766px;height:20px;background:#f0f0f0;"></div>
<div style="position:absolute;left:832px;top:614px;width:662px;height:20px;background:#cdcdcd;"></div>
<svg style="position:absolute;left:816px;top:619px;overflow:visible" width="8" height="10" viewBox="0 0 8 10"><path d="M7 1 L2.5 5 L7 9" stroke="#606060" stroke-width="2.3" fill="none"/></svg>
<svg style="position:absolute;left:1541px;top:619px;overflow:visible" width="8" height="10" viewBox="0 0 8 10"><path d="M1 1 L5.5 5 L1 9" stroke="#606060" stroke-width="2.3" fill="none"/></svg>
<span style="position:absolute;top:642px;height:17px;line-height:17px;font-size:15px;color:#000;white-space:pre;left:39px;transform-origin:0 0;transform:scaleX(0.9942);">0 B of 301 MB in 0 of 88</span>
<span style="position:absolute;top:642px;height:17px;line-height:17px;font-size:15px;color:#000;white-space:pre;left:814px;transform-origin:0 0;transform:scaleX(0.9942);">0 B of 302 MB in 0 of 94</span>
<div style="position:absolute;left:34px;top:662px;width:1544px;height:1px;background:#a0a0a0;"></div>
<div style="position:absolute;left:34px;top:666px;width:1544px;height:26px;background:#bfcddb;"></div>
<span style="position:absolute;top:671px;height:17px;line-height:17px;font-size:15px;color:#000;white-space:pre;left:39px;transform-origin:0 0;transform:scaleX(0.9548);">Queue</span>
<div style="position:absolute;left:35px;top:693px;width:230px;height:29px;background:#f4f4f4;"></div>
<div style="position:absolute;left:36px;top:694px;width:27px;height:26px;background:#e5f1fb;box-sizing:border-box;border:1px solid #3d8fe6"></div>
<svg style="position:absolute;left:40px;top:697px;overflow:visible" width="19" height="19" viewBox="0 0 19 19"><path d="M6.5 0.5 H14 L17.5 4 V13 H6.5 Z" fill="#fff" stroke="#4f6e9a"/><path d="M0.5 5.5 H10 V18.5 H0.5 Z" fill="#fff" stroke="#4f6e9a"/><path d="M2 8.5 H8 M2 11 H8 M2 13.5 H8 M2 16 H8 M8 3 H15 M8 5.5 H15" stroke="#5c7fb0"/><path d="M8 7 L19 12.5 L8 18.5 Z" fill="#2eb02e" stroke="#1f8a1f" stroke-width="0.6"/></svg>
<div style="position:absolute;left:67px;top:694px;width:1px;height:26px;background:#c8c8c8;"></div>
<svg style="position:absolute;left:76px;top:698px;overflow:visible" width="17" height="19" viewBox="0 0 17 19"><path d="M1 1 L16 9.5 L1 18 Z" fill="#c3c3c3" stroke="#b5b5b5" stroke-width="0.7"/></svg>
<svg style="position:absolute;left:102px;top:699px;overflow:visible" width="18" height="18" viewBox="0 0 18 18"><path d="M1 3.5 L3.5 1 L9 6.5 L14.5 1 L17 3.5 L11.5 9 L17 14.5 L14.5 17 L9 11.5 L3.5 17 L1 14.5 L6.5 9 Z" fill="#bdbdbd" stroke="#a8a8a8" stroke-width="0.7"/></svg>
<div style="position:absolute;left:129px;top:694px;width:1px;height:26px;background:#c8c8c8;"></div>
<svg style="position:absolute;left:139px;top:697px;overflow:visible" width="13" height="20" viewBox="0 0 13 20"><path d="M6.5 0.5 L12.5 9 H9 V19.5 H4 V9 H0.5 Z" fill="#cdcdcd" stroke="#bdbdbd" stroke-width="0.6"/></svg>
<svg style="position:absolute;left:166px;top:697px;overflow:visible" width="13" height="20" viewBox="0 0 13 20"><path d="M6.5 19.5 L12.5 11 H9 V0.5 H4 V11 H0.5 Z" fill="#cdcdcd" stroke="#bdbdbd" stroke-width="0.6"/></svg>
<div style="position:absolute;left:191px;top:694px;width:1px;height:26px;background:#c8c8c8;"></div>
<svg style="position:absolute;left:198px;top:697px;overflow:visible" width="20" height="20" viewBox="0 0 20 20"><path d="M6.5 0.5 H14 L17.5 4 V13 H6.5 Z" fill="#f2f2f2" stroke="#c8c8c8"/><path d="M0.5 5.5 H10 V18.5 H0.5 Z" fill="#f2f2f2" stroke="#c8c8c8"/><path d="M2 8.5 H8 M2 11 H8 M2 13.5 H8 M2 16 H8" stroke="#cfcfcf"/><circle cx="14" cy="14" r="5.5" fill="#cdcdcd" stroke="#bdbdbd" stroke-width="0.6"/></svg>
<svg style="position:absolute;left:226px;top:707px;overflow:visible" width="7" height="4" viewBox="0 0 7 4"><path d="M0 0 H7 L3.5 4 Z" fill="#b0b0b0"/></svg>
<svg style="position:absolute;left:240px;top:697px;overflow:visible" width="20" height="20" viewBox="0 0 20 20"><defs><linearGradient id="gg" x1="0" y1="0" x2="1" y2="1"><stop offset="0" stop-color="#f4f6fa"/><stop offset="0.5" stop-color="#b9c3d0"/><stop offset="1" stop-color="#e6ebf2"/></linearGradient></defs><polygon points="16.28,7.40 17.07,8.63 19.19,8.55 19.19,11.45 17.07,11.37 16.28,12.60 15.97,14.03 17.52,15.47 15.47,17.52 14.03,15.97 12.60,16.28 11.37,17.07 11.45,19.19 8.55,19.19 8.63,17.07 7.40,16.28 5.97,15.97 4.53,17.52 2.48,15.47 4.03,14.03 3.72,12.60 2.93,11.37 0.81,11.45 0.81,8.55 2.93,8.63 3.72,7.40 4.03,5.97 2.48,4.53 4.53,2.48 5.97,4.03 7.40,3.72 8.63,2.93 8.55,0.81 11.45,0.81 11.37,2.93 12.60,3.72 14.03,4.03 15.47,2.48 17.52,4.53 15.97,5.97" fill="url(#gg)" stroke="#4d5766" stroke-width="1.1" stroke-linejoin="round"/><circle cx="10" cy="10" r="2.6" fill="#fff" stroke="#4d5766" stroke-width="1.1"/></svg>
<div style="position:absolute;left:34px;top:722px;width:1544px;height:98px;background:#ffffff;"></div>
<div style="position:absolute;left:34px;top:722px;width:1544px;height:1px;background:#858a91;"></div>
<div style="position:absolute;left:34px;top:722px;width:1px;height:98px;background:#858a91;"></div>
<div style="position:absolute;left:1577px;top:722px;width:1px;height:98px;background:#858a91;"></div>
<div style="position:absolute;left:123px;top:724px;width:1px;height:26px;background:#e5e5e5;"></div>
<div style="position:absolute;left:663px;top:724px;width:1px;height:26px;background:#e5e5e5;"></div>
<div style="position:absolute;left:976px;top:724px;width:1px;height:26px;background:#e5e5e5;"></div>
<div style="position:absolute;left:1076px;top:724px;width:1px;height:26px;background:#e5e5e5;"></div>
<div style="position:absolute;left:1176px;top:724px;width:1px;height:26px;background:#e5e5e5;"></div>
<div style="position:absolute;left:1276px;top:724px;width:1px;height:26px;background:#e5e5e5;"></div>
<div style="position:absolute;left:1401px;top:724px;width:1px;height:26px;background:#e5e5e5;"></div>
<span style="position:absolute;top:729px;height:17px;line-height:17px;font-size:15px;color:#000;white-space:pre;left:42px;transform-origin:0 0;">Operation</span>
<span style="position:absolute;top:729px;height:17px;line-height:17px;font-size:15px;color:#000;white-space:pre;left:130px;transform-origin:0 0;transform:scaleX(0.9468);">Source</span>
<span style="position:absolute;top:729px;height:17px;line-height:17px;font-size:15px;color:#000;white-space:pre;left:670px;transform-origin:0 0;transform:scaleX(1.0261);">Destination</span>
<span style="position:absolute;top:729px;height:17px;line-height:17px;font-size:15px;color:#000;white-space:pre;left:993.03px;transform-origin:100% 0;transform:scaleX(0.9744);">Transferred</span>
<span style="position:absolute;top:729px;height:17px;line-height:17px;font-size:15px;color:#000;white-space:pre;left:1137.22px;transform-origin:100% 0;transform:scaleX(0.9763);">Time</span>
<span style="position:absolute;top:729px;height:17px;line-height:17px;font-size:15px;color:#000;white-space:pre;left:1226.63px;transform-origin:100% 0;transform:scaleX(0.9683);">Speed</span>
<span style="position:absolute;top:729px;height:17px;line-height:17px;font-size:15px;color:#000;white-space:pre;left:1308.99px;transform-origin:50% 0;transform:scaleX(0.9497);">Progress</span>
<svg style="position:absolute;left:41px;top:752px;overflow:visible" width="19" height="21" viewBox="0 0 19 21"><path d="M6.5 0.5 H14.5 L17.5 3.5 V14 H6.5 Z" fill="#ffffff" stroke="#4f78b3"/><path d="M8.5 3.5 H12.5 M8.5 5.5 H16 M8.5 7.5 H16 M8.5 9.5 H16" stroke="#5a7fb5"/><path d="M0.5 5.5 H10 V20 H0.5 Z" fill="#ffffff" stroke="#4f78b3"/><path d="M2.5 8.5 H8.5 M2.5 10.5 H8.5 M2.5 12.5 H8.5 M2.5 14.5 H8.5 M2.5 16.5 H8.5" stroke="#5a7fb5"/><path d="M10.5 20.5 L15 16 L18 19 V10 H9 L12 13 L7.5 17.5 Z" fill="#5a9cf0" stroke="#2f66b8" stroke-width="0.9"/></svg>
<span style="position:absolute;top:754px;height:17px;line-height:17px;font-size:15px;color:#6d6d6d;white-space:pre;left:130px;transform-origin:0 0;">C:\Users\FAM\Documents\Uni\webstuff\introling\02_What_is_Linguistics</span>
<span style="position:absolute;top:754px;height:17px;line-height:17px;font-size:15px;color:#6d6d6d;white-space:pre;left:670px;transform-origin:0 0;transform:scaleX(1.0518);">/www/morrissey/introling/*.*</span>
<span style="position:absolute;top:754px;height:17px;line-height:17px;font-size:15px;color:#6d6d6d;white-space:pre;left:1037.48px;transform-origin:100% 0;transform:scaleX(0.9840);">0 KB</span>
<span style="position:absolute;top:754px;height:17px;line-height:17px;font-size:15px;color:#6d6d6d;white-space:pre;left:1301.73px;transform-origin:50% 0;transform:scaleX(1.0201);">Completed</span></body></html>
